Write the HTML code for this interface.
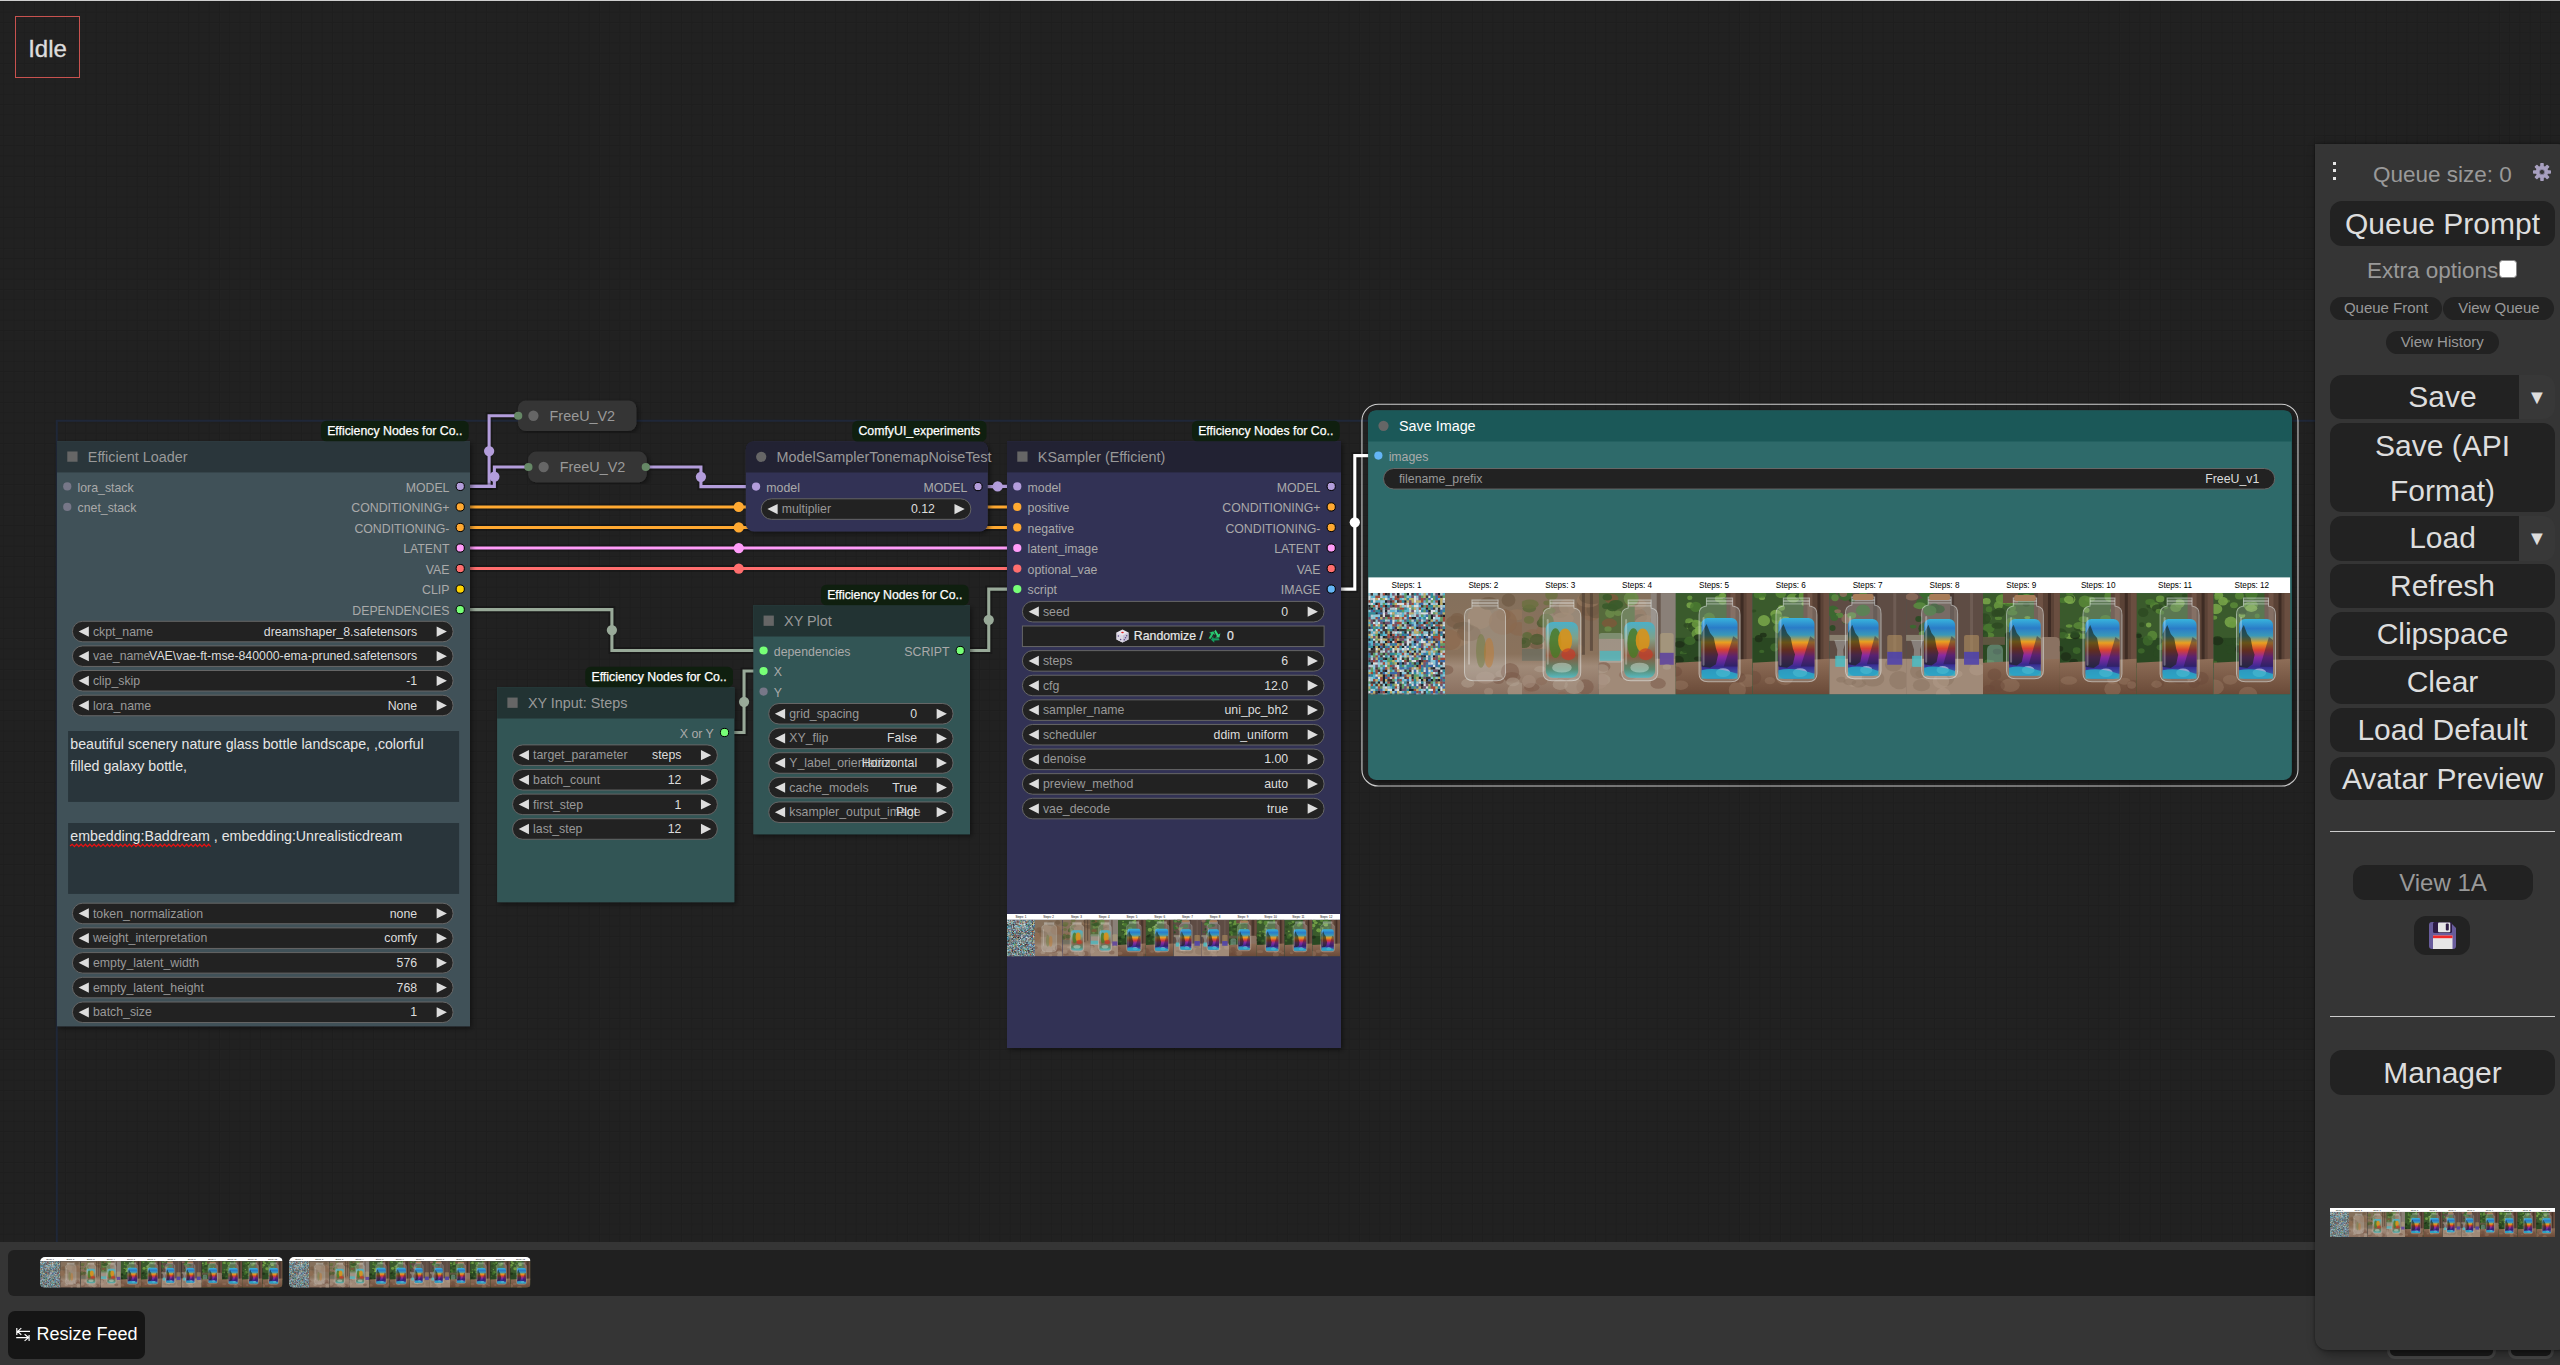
<!DOCTYPE html><html><head><meta charset="utf-8"><style>html,body{margin:0;padding:0;width:2560px;height:1365px;overflow:hidden;background:#212121;font-family:"Liberation Sans",sans-serif;}.abs{position:absolute;}.menu{position:absolute;left:2315px;top:144px;width:255px;height:1206px;background:#353535;border-radius:0 12px 12px 12px;box-shadow:0 0 3px rgba(0,0,0,.45),4px 4px 12px rgba(0,0,0,.4);color:#999;}.btn{position:absolute;background:#222;color:#ddd;border-radius:12px;text-align:center;font-size:30px;box-sizing:border-box;}.sbtn{position:absolute;background:#222;color:#999;border-radius:12px;text-align:center;font-size:15px;box-sizing:border-box;}</style></head><body><svg width="0" height="0" style="position:absolute" font-family='"Liberation Sans", sans-serif'><defs><linearGradient id="gal" x1="0" y1="0" x2="0" y2="1"><stop offset="0" stop-color="#38b4dc"/><stop offset="0.16" stop-color="#2a7cc8"/><stop offset="0.28" stop-color="#3a98b8"/><stop offset="0.4" stop-color="#e8a020"/><stop offset="0.52" stop-color="#d84030"/><stop offset="0.64" stop-color="#8a2aa0"/><stop offset="0.8" stop-color="#3a2a90"/><stop offset="1" stop-color="#3a78b8"/></linearGradient><linearGradient id="tre" x1="0" y1="0" x2="0" y2="1"><stop offset="0" stop-color="#4ab0c8"/><stop offset="0.3" stop-color="#80a088"/><stop offset="0.6" stop-color="#8a5a40"/><stop offset="0.85" stop-color="#5a8a70"/><stop offset="1" stop-color="#58b8c0"/></linearGradient><linearGradient id="tab" x1="0" y1="0" x2="0" y2="1"><stop offset="0" stop-color="#8e6e58"/><stop offset="1" stop-color="#6a4a38"/></linearGradient><linearGradient id="fogg" x1="0" y1="0" x2="0" y2="1"><stop offset="0" stop-color="#84705c"/><stop offset="0.6" stop-color="#8a725c"/><stop offset="0.72" stop-color="#a08a78"/><stop offset="1" stop-color="#8a7060"/></linearGradient><filter id="nz" x="0" y="0" width="100%" height="100%" color-interpolation-filters="sRGB"><feTurbulence type="fractalNoise" baseFrequency="0.5" numOctaves="1" seed="4"/><feComponentTransfer><feFuncR type="linear" slope="3.6" intercept="-1.3"/><feFuncG type="linear" slope="3.6" intercept="-1.2"/><feFuncB type="linear" slope="3.6" intercept="-1.12"/><feFuncA type="linear" slope="0" intercept="1"/></feComponentTransfer><feColorMatrix type="saturate" values="0.35"/></filter><symbol id="strip" viewBox="0 0 922 118" preserveAspectRatio="none"><rect width="922" height="16" fill="#fff"/><text x="38.4" y="11.3" font-size="8.2" fill="#000" text-anchor="middle">Steps: 1</text><text x="115.2" y="11.3" font-size="8.2" fill="#000" text-anchor="middle">Steps: 2</text><text x="192.1" y="11.3" font-size="8.2" fill="#000" text-anchor="middle">Steps: 3</text><text x="268.9" y="11.3" font-size="8.2" fill="#000" text-anchor="middle">Steps: 4</text><text x="345.8" y="11.3" font-size="8.2" fill="#000" text-anchor="middle">Steps: 5</text><text x="422.6" y="11.3" font-size="8.2" fill="#000" text-anchor="middle">Steps: 6</text><text x="499.4" y="11.3" font-size="8.2" fill="#000" text-anchor="middle">Steps: 7</text><text x="576.2" y="11.3" font-size="8.2" fill="#000" text-anchor="middle">Steps: 8</text><text x="653.1" y="11.3" font-size="8.2" fill="#000" text-anchor="middle">Steps: 9</text><text x="729.9" y="11.3" font-size="8.2" fill="#000" text-anchor="middle">Steps: 10</text><text x="806.7" y="11.3" font-size="8.2" fill="#000" text-anchor="middle">Steps: 11</text><text x="883.6" y="11.3" font-size="8.2" fill="#000" text-anchor="middle">Steps: 12</text><svg x="0" y="16" width="77.1" height="102" viewBox="0 0 77.1 102" overflow="hidden"><rect width="77" height="102" fill="#808a90"/><path fill="#5ab4cc" d="M50.4 0h2.4v2.4h-2.4zM74.4 0h2.4v2.4h-2.4zM2.4 2.4h2.4v2.4h-2.4zM4.8 2.4h2.4v2.4h-2.4zM14.4 2.4h2.4v2.4h-2.4zM40.8 2.4h2.4v2.4h-2.4zM76.8 2.4h2.4v2.4h-2.4zM19.2 4.8h2.4v2.4h-2.4zM24 4.8h2.4v2.4h-2.4zM31.2 4.8h2.4v2.4h-2.4zM69.6 4.8h2.4v2.4h-2.4zM7.2 7.2h2.4v2.4h-2.4zM9.6 7.2h2.4v2.4h-2.4zM55.2 7.2h2.4v2.4h-2.4zM64.8 7.2h2.4v2.4h-2.4zM4.8 9.6h2.4v2.4h-2.4zM16.8 9.6h2.4v2.4h-2.4zM45.6 9.6h2.4v2.4h-2.4zM43.2 12h2.4v2.4h-2.4zM50.4 12h2.4v2.4h-2.4zM38.4 14.4h2.4v2.4h-2.4zM52.8 14.4h2.4v2.4h-2.4zM55.2 14.4h2.4v2.4h-2.4zM21.6 16.8h2.4v2.4h-2.4zM24 16.8h2.4v2.4h-2.4zM36 16.8h2.4v2.4h-2.4zM38.4 16.8h2.4v2.4h-2.4zM76.8 16.8h2.4v2.4h-2.4zM26.4 19.2h2.4v2.4h-2.4zM33.6 19.2h2.4v2.4h-2.4zM48 19.2h2.4v2.4h-2.4zM21.6 21.6h2.4v2.4h-2.4zM33.6 21.6h2.4v2.4h-2.4zM55.2 21.6h2.4v2.4h-2.4zM52.8 24h2.4v2.4h-2.4zM26.4 26.4h2.4v2.4h-2.4zM33.6 26.4h2.4v2.4h-2.4zM55.2 26.4h2.4v2.4h-2.4zM69.6 26.4h2.4v2.4h-2.4zM0 28.8h2.4v2.4h-2.4zM43.2 28.8h2.4v2.4h-2.4zM52.8 28.8h2.4v2.4h-2.4zM28.8 31.2h2.4v2.4h-2.4zM9.6 33.6h2.4v2.4h-2.4zM19.2 33.6h2.4v2.4h-2.4zM36 33.6h2.4v2.4h-2.4zM45.6 33.6h2.4v2.4h-2.4zM2.4 38.4h2.4v2.4h-2.4zM9.6 38.4h2.4v2.4h-2.4zM14.4 38.4h2.4v2.4h-2.4zM4.8 40.8h2.4v2.4h-2.4zM14.4 40.8h2.4v2.4h-2.4zM16.8 40.8h2.4v2.4h-2.4zM26.4 40.8h2.4v2.4h-2.4zM0 43.2h2.4v2.4h-2.4zM36 45.6h2.4v2.4h-2.4zM0 48h2.4v2.4h-2.4zM2.4 48h2.4v2.4h-2.4zM43.2 48h2.4v2.4h-2.4zM2.4 50.4h2.4v2.4h-2.4zM9.6 50.4h2.4v2.4h-2.4zM43.2 50.4h2.4v2.4h-2.4zM48 52.8h2.4v2.4h-2.4zM57.6 52.8h2.4v2.4h-2.4zM31.2 55.2h2.4v2.4h-2.4zM55.2 55.2h2.4v2.4h-2.4zM64.8 55.2h2.4v2.4h-2.4zM33.6 57.6h2.4v2.4h-2.4zM57.6 57.6h2.4v2.4h-2.4zM28.8 60h2.4v2.4h-2.4zM31.2 60h2.4v2.4h-2.4zM38.4 60h2.4v2.4h-2.4zM52.8 60h2.4v2.4h-2.4zM62.4 60h2.4v2.4h-2.4zM9.6 62.4h2.4v2.4h-2.4zM33.6 62.4h2.4v2.4h-2.4zM48 62.4h2.4v2.4h-2.4zM9.6 67.2h2.4v2.4h-2.4zM14.4 67.2h2.4v2.4h-2.4zM16.8 67.2h2.4v2.4h-2.4zM26.4 67.2h2.4v2.4h-2.4zM31.2 67.2h2.4v2.4h-2.4zM14.4 72h2.4v2.4h-2.4zM36 74.4h2.4v2.4h-2.4zM4.8 76.8h2.4v2.4h-2.4zM12 76.8h2.4v2.4h-2.4zM24 76.8h2.4v2.4h-2.4zM62.4 76.8h2.4v2.4h-2.4zM50.4 79.2h2.4v2.4h-2.4zM60 79.2h2.4v2.4h-2.4zM74.4 79.2h2.4v2.4h-2.4zM4.8 81.6h2.4v2.4h-2.4zM50.4 81.6h2.4v2.4h-2.4zM72 81.6h2.4v2.4h-2.4zM76.8 81.6h2.4v2.4h-2.4zM4.8 84h2.4v2.4h-2.4zM9.6 86.4h2.4v2.4h-2.4zM26.4 86.4h2.4v2.4h-2.4zM33.6 86.4h2.4v2.4h-2.4zM7.2 88.8h2.4v2.4h-2.4zM16.8 88.8h2.4v2.4h-2.4zM64.8 88.8h2.4v2.4h-2.4zM4.8 91.2h2.4v2.4h-2.4zM76.8 91.2h2.4v2.4h-2.4zM21.6 93.6h2.4v2.4h-2.4zM50.4 96h2.4v2.4h-2.4zM67.2 96h2.4v2.4h-2.4zM33.6 98.4h2.4v2.4h-2.4zM57.6 98.4h2.4v2.4h-2.4zM67.2 100.8h2.4v2.4h-2.4z"/><path fill="#d8dde0" d="M31.2 0h2.4v2.4h-2.4zM40.8 0h2.4v2.4h-2.4zM0 2.4h2.4v2.4h-2.4zM45.6 2.4h2.4v2.4h-2.4zM60 2.4h2.4v2.4h-2.4zM0 4.8h2.4v2.4h-2.4zM4.8 4.8h2.4v2.4h-2.4zM9.6 4.8h2.4v2.4h-2.4zM16.8 4.8h2.4v2.4h-2.4zM45.6 4.8h2.4v2.4h-2.4zM62.4 4.8h2.4v2.4h-2.4zM74.4 4.8h2.4v2.4h-2.4zM4.8 7.2h2.4v2.4h-2.4zM45.6 7.2h2.4v2.4h-2.4zM2.4 9.6h2.4v2.4h-2.4zM28.8 9.6h2.4v2.4h-2.4zM31.2 9.6h2.4v2.4h-2.4zM33.6 9.6h2.4v2.4h-2.4zM38.4 12h2.4v2.4h-2.4zM45.6 12h2.4v2.4h-2.4zM48 12h2.4v2.4h-2.4zM7.2 14.4h2.4v2.4h-2.4zM26.4 14.4h2.4v2.4h-2.4zM40.8 14.4h2.4v2.4h-2.4zM72 14.4h2.4v2.4h-2.4zM45.6 16.8h2.4v2.4h-2.4zM50.4 16.8h2.4v2.4h-2.4zM62.4 16.8h2.4v2.4h-2.4zM64.8 16.8h2.4v2.4h-2.4zM14.4 19.2h2.4v2.4h-2.4zM21.6 19.2h2.4v2.4h-2.4zM52.8 19.2h2.4v2.4h-2.4zM55.2 19.2h2.4v2.4h-2.4zM57.6 19.2h2.4v2.4h-2.4zM62.4 19.2h2.4v2.4h-2.4zM14.4 21.6h2.4v2.4h-2.4zM28.8 21.6h2.4v2.4h-2.4zM40.8 21.6h2.4v2.4h-2.4zM57.6 24h2.4v2.4h-2.4zM64.8 24h2.4v2.4h-2.4zM24 26.4h2.4v2.4h-2.4zM4.8 28.8h2.4v2.4h-2.4zM9.6 28.8h2.4v2.4h-2.4zM24 28.8h2.4v2.4h-2.4zM7.2 31.2h2.4v2.4h-2.4zM55.2 31.2h2.4v2.4h-2.4zM64.8 31.2h2.4v2.4h-2.4zM74.4 31.2h2.4v2.4h-2.4zM16.8 33.6h2.4v2.4h-2.4zM40.8 33.6h2.4v2.4h-2.4zM7.2 36h2.4v2.4h-2.4zM76.8 36h2.4v2.4h-2.4zM26.4 38.4h2.4v2.4h-2.4zM31.2 38.4h2.4v2.4h-2.4zM38.4 38.4h2.4v2.4h-2.4zM74.4 38.4h2.4v2.4h-2.4zM48 40.8h2.4v2.4h-2.4zM57.6 40.8h2.4v2.4h-2.4zM72 43.2h2.4v2.4h-2.4zM4.8 45.6h2.4v2.4h-2.4zM12 45.6h2.4v2.4h-2.4zM38.4 45.6h2.4v2.4h-2.4zM52.8 45.6h2.4v2.4h-2.4zM72 45.6h2.4v2.4h-2.4zM76.8 45.6h2.4v2.4h-2.4zM24 48h2.4v2.4h-2.4zM38.4 48h2.4v2.4h-2.4zM52.8 48h2.4v2.4h-2.4zM55.2 48h2.4v2.4h-2.4zM38.4 50.4h2.4v2.4h-2.4zM48 50.4h2.4v2.4h-2.4zM76.8 50.4h2.4v2.4h-2.4zM36 52.8h2.4v2.4h-2.4zM45.6 52.8h2.4v2.4h-2.4zM7.2 55.2h2.4v2.4h-2.4zM24 55.2h2.4v2.4h-2.4zM33.6 55.2h2.4v2.4h-2.4zM38.4 55.2h2.4v2.4h-2.4zM67.2 55.2h2.4v2.4h-2.4zM14.4 57.6h2.4v2.4h-2.4zM24 57.6h2.4v2.4h-2.4zM72 60h2.4v2.4h-2.4zM14.4 62.4h2.4v2.4h-2.4zM31.2 62.4h2.4v2.4h-2.4zM43.2 62.4h2.4v2.4h-2.4zM57.6 62.4h2.4v2.4h-2.4zM31.2 64.8h2.4v2.4h-2.4zM33.6 67.2h2.4v2.4h-2.4zM43.2 67.2h2.4v2.4h-2.4zM45.6 67.2h2.4v2.4h-2.4zM4.8 69.6h2.4v2.4h-2.4zM7.2 69.6h2.4v2.4h-2.4zM62.4 69.6h2.4v2.4h-2.4zM69.6 69.6h2.4v2.4h-2.4zM74.4 69.6h2.4v2.4h-2.4zM16.8 72h2.4v2.4h-2.4zM28.8 72h2.4v2.4h-2.4zM64.8 72h2.4v2.4h-2.4zM28.8 74.4h2.4v2.4h-2.4zM76.8 74.4h2.4v2.4h-2.4zM31.2 76.8h2.4v2.4h-2.4zM43.2 76.8h2.4v2.4h-2.4zM48 76.8h2.4v2.4h-2.4zM55.2 76.8h2.4v2.4h-2.4zM60 76.8h2.4v2.4h-2.4zM72 76.8h2.4v2.4h-2.4zM43.2 79.2h2.4v2.4h-2.4zM64.8 79.2h2.4v2.4h-2.4zM7.2 81.6h2.4v2.4h-2.4zM60 81.6h2.4v2.4h-2.4zM9.6 84h2.4v2.4h-2.4zM0 86.4h2.4v2.4h-2.4zM26.4 88.8h2.4v2.4h-2.4zM40.8 88.8h2.4v2.4h-2.4zM50.4 88.8h2.4v2.4h-2.4zM76.8 88.8h2.4v2.4h-2.4zM28.8 91.2h2.4v2.4h-2.4zM43.2 91.2h2.4v2.4h-2.4zM48 91.2h2.4v2.4h-2.4zM55.2 91.2h2.4v2.4h-2.4zM69.6 91.2h2.4v2.4h-2.4zM16.8 93.6h2.4v2.4h-2.4zM57.6 93.6h2.4v2.4h-2.4zM72 93.6h2.4v2.4h-2.4zM19.2 96h2.4v2.4h-2.4zM21.6 96h2.4v2.4h-2.4zM28.8 96h2.4v2.4h-2.4zM60 96h2.4v2.4h-2.4zM62.4 96h2.4v2.4h-2.4zM72 96h2.4v2.4h-2.4zM0 98.4h2.4v2.4h-2.4zM76.8 98.4h2.4v2.4h-2.4zM14.4 100.8h2.4v2.4h-2.4zM76.8 100.8h2.4v2.4h-2.4z"/><path fill="#1c2228" d="M16.8 0h2.4v2.4h-2.4zM28.8 0h2.4v2.4h-2.4zM38.4 0h2.4v2.4h-2.4zM69.6 0h2.4v2.4h-2.4zM76.8 4.8h2.4v2.4h-2.4zM16.8 7.2h2.4v2.4h-2.4zM36 7.2h2.4v2.4h-2.4zM69.6 7.2h2.4v2.4h-2.4zM7.2 9.6h2.4v2.4h-2.4zM60 9.6h2.4v2.4h-2.4zM69.6 9.6h2.4v2.4h-2.4zM74.4 9.6h2.4v2.4h-2.4zM0 12h2.4v2.4h-2.4zM16.8 12h2.4v2.4h-2.4zM2.4 14.4h2.4v2.4h-2.4zM9.6 14.4h2.4v2.4h-2.4zM57.6 14.4h2.4v2.4h-2.4zM69.6 14.4h2.4v2.4h-2.4zM76.8 14.4h2.4v2.4h-2.4zM16.8 16.8h2.4v2.4h-2.4zM60 16.8h2.4v2.4h-2.4zM7.2 19.2h2.4v2.4h-2.4zM62.4 21.6h2.4v2.4h-2.4zM74.4 21.6h2.4v2.4h-2.4zM43.2 24h2.4v2.4h-2.4zM45.6 24h2.4v2.4h-2.4zM62.4 24h2.4v2.4h-2.4zM60 26.4h2.4v2.4h-2.4zM76.8 26.4h2.4v2.4h-2.4zM38.4 28.8h2.4v2.4h-2.4zM55.2 28.8h2.4v2.4h-2.4zM76.8 28.8h2.4v2.4h-2.4zM16.8 31.2h2.4v2.4h-2.4zM48 33.6h2.4v2.4h-2.4zM57.6 33.6h2.4v2.4h-2.4zM62.4 33.6h2.4v2.4h-2.4zM28.8 36h2.4v2.4h-2.4zM55.2 36h2.4v2.4h-2.4zM36 38.4h2.4v2.4h-2.4zM60 38.4h2.4v2.4h-2.4zM9.6 40.8h2.4v2.4h-2.4zM21.6 40.8h2.4v2.4h-2.4zM14.4 43.2h2.4v2.4h-2.4zM43.2 43.2h2.4v2.4h-2.4zM55.2 43.2h2.4v2.4h-2.4zM74.4 43.2h2.4v2.4h-2.4zM0 45.6h2.4v2.4h-2.4zM24 45.6h2.4v2.4h-2.4zM16.8 48h2.4v2.4h-2.4zM21.6 48h2.4v2.4h-2.4zM28.8 48h2.4v2.4h-2.4zM31.2 48h2.4v2.4h-2.4zM45.6 48h2.4v2.4h-2.4zM14.4 50.4h2.4v2.4h-2.4zM36 50.4h2.4v2.4h-2.4zM4.8 52.8h2.4v2.4h-2.4zM9.6 52.8h2.4v2.4h-2.4zM24 52.8h2.4v2.4h-2.4zM33.6 52.8h2.4v2.4h-2.4zM2.4 55.2h2.4v2.4h-2.4zM38.4 57.6h2.4v2.4h-2.4zM45.6 57.6h2.4v2.4h-2.4zM43.2 60h2.4v2.4h-2.4zM21.6 62.4h2.4v2.4h-2.4zM55.2 62.4h2.4v2.4h-2.4zM64.8 62.4h2.4v2.4h-2.4zM16.8 64.8h2.4v2.4h-2.4zM24 64.8h2.4v2.4h-2.4zM50.4 67.2h2.4v2.4h-2.4zM2.4 69.6h2.4v2.4h-2.4zM28.8 69.6h2.4v2.4h-2.4zM33.6 69.6h2.4v2.4h-2.4zM50.4 69.6h2.4v2.4h-2.4zM48 72h2.4v2.4h-2.4zM64.8 74.4h2.4v2.4h-2.4zM72 74.4h2.4v2.4h-2.4zM74.4 74.4h2.4v2.4h-2.4zM16.8 76.8h2.4v2.4h-2.4zM69.6 76.8h2.4v2.4h-2.4zM31.2 79.2h2.4v2.4h-2.4zM14.4 81.6h2.4v2.4h-2.4zM21.6 81.6h2.4v2.4h-2.4zM31.2 81.6h2.4v2.4h-2.4zM67.2 81.6h2.4v2.4h-2.4zM69.6 81.6h2.4v2.4h-2.4zM14.4 84h2.4v2.4h-2.4zM43.2 84h2.4v2.4h-2.4zM50.4 84h2.4v2.4h-2.4zM14.4 86.4h2.4v2.4h-2.4zM52.8 86.4h2.4v2.4h-2.4zM57.6 86.4h2.4v2.4h-2.4zM62.4 86.4h2.4v2.4h-2.4zM69.6 86.4h2.4v2.4h-2.4zM9.6 88.8h2.4v2.4h-2.4zM14.4 88.8h2.4v2.4h-2.4zM21.6 88.8h2.4v2.4h-2.4zM24 88.8h2.4v2.4h-2.4zM16.8 91.2h2.4v2.4h-2.4zM52.8 91.2h2.4v2.4h-2.4zM31.2 93.6h2.4v2.4h-2.4zM24 96h2.4v2.4h-2.4zM31.2 96h2.4v2.4h-2.4zM40.8 96h2.4v2.4h-2.4zM43.2 96h2.4v2.4h-2.4zM69.6 96h2.4v2.4h-2.4zM9.6 98.4h2.4v2.4h-2.4zM16.8 98.4h2.4v2.4h-2.4zM21.6 100.8h2.4v2.4h-2.4zM45.6 100.8h2.4v2.4h-2.4z"/><path fill="#a04a3a" d="M14.4 0h2.4v2.4h-2.4zM7.2 2.4h2.4v2.4h-2.4zM9.6 2.4h2.4v2.4h-2.4zM26.4 2.4h2.4v2.4h-2.4zM31.2 2.4h2.4v2.4h-2.4zM69.6 2.4h2.4v2.4h-2.4zM26.4 4.8h2.4v2.4h-2.4zM28.8 4.8h2.4v2.4h-2.4zM52.8 4.8h2.4v2.4h-2.4zM0 7.2h2.4v2.4h-2.4zM24 7.2h2.4v2.4h-2.4zM31.2 7.2h2.4v2.4h-2.4zM52.8 7.2h2.4v2.4h-2.4zM67.2 7.2h2.4v2.4h-2.4zM9.6 9.6h2.4v2.4h-2.4zM36 9.6h2.4v2.4h-2.4zM43.2 9.6h2.4v2.4h-2.4zM4.8 12h2.4v2.4h-2.4zM9.6 12h2.4v2.4h-2.4zM14.4 12h2.4v2.4h-2.4zM26.4 12h2.4v2.4h-2.4zM57.6 12h2.4v2.4h-2.4zM12 14.4h2.4v2.4h-2.4zM31.2 14.4h2.4v2.4h-2.4zM33.6 14.4h2.4v2.4h-2.4zM50.4 14.4h2.4v2.4h-2.4zM36 21.6h2.4v2.4h-2.4zM69.6 21.6h2.4v2.4h-2.4zM7.2 24h2.4v2.4h-2.4zM19.2 24h2.4v2.4h-2.4zM26.4 24h2.4v2.4h-2.4zM28.8 24h2.4v2.4h-2.4zM33.6 24h2.4v2.4h-2.4zM40.8 24h2.4v2.4h-2.4zM74.4 24h2.4v2.4h-2.4zM67.2 26.4h2.4v2.4h-2.4zM74.4 26.4h2.4v2.4h-2.4zM28.8 28.8h2.4v2.4h-2.4zM31.2 28.8h2.4v2.4h-2.4zM57.6 28.8h2.4v2.4h-2.4zM4.8 31.2h2.4v2.4h-2.4zM24 31.2h2.4v2.4h-2.4zM52.8 31.2h2.4v2.4h-2.4zM67.2 31.2h2.4v2.4h-2.4zM69.6 31.2h2.4v2.4h-2.4zM38.4 33.6h2.4v2.4h-2.4zM9.6 36h2.4v2.4h-2.4zM50.4 36h2.4v2.4h-2.4zM69.6 36h2.4v2.4h-2.4zM52.8 38.4h2.4v2.4h-2.4zM76.8 38.4h2.4v2.4h-2.4zM19.2 40.8h2.4v2.4h-2.4zM24 40.8h2.4v2.4h-2.4zM40.8 40.8h2.4v2.4h-2.4zM69.6 40.8h2.4v2.4h-2.4zM19.2 43.2h2.4v2.4h-2.4zM28.8 43.2h2.4v2.4h-2.4zM33.6 43.2h2.4v2.4h-2.4zM45.6 43.2h2.4v2.4h-2.4zM64.8 43.2h2.4v2.4h-2.4zM67.2 43.2h2.4v2.4h-2.4zM69.6 43.2h2.4v2.4h-2.4zM76.8 43.2h2.4v2.4h-2.4zM26.4 45.6h2.4v2.4h-2.4zM40.8 45.6h2.4v2.4h-2.4zM69.6 45.6h2.4v2.4h-2.4zM19.2 48h2.4v2.4h-2.4zM26.4 48h2.4v2.4h-2.4zM74.4 48h2.4v2.4h-2.4zM12 50.4h2.4v2.4h-2.4zM31.2 50.4h2.4v2.4h-2.4zM62.4 50.4h2.4v2.4h-2.4zM28.8 52.8h2.4v2.4h-2.4zM60 52.8h2.4v2.4h-2.4zM72 52.8h2.4v2.4h-2.4zM19.2 55.2h2.4v2.4h-2.4zM43.2 55.2h2.4v2.4h-2.4zM57.6 55.2h2.4v2.4h-2.4zM33.6 60h2.4v2.4h-2.4zM74.4 60h2.4v2.4h-2.4zM7.2 62.4h2.4v2.4h-2.4zM24 62.4h2.4v2.4h-2.4zM45.6 62.4h2.4v2.4h-2.4zM26.4 64.8h2.4v2.4h-2.4zM64.8 64.8h2.4v2.4h-2.4zM72 64.8h2.4v2.4h-2.4zM74.4 64.8h2.4v2.4h-2.4zM76.8 64.8h2.4v2.4h-2.4zM4.8 67.2h2.4v2.4h-2.4zM36 67.2h2.4v2.4h-2.4zM55.2 67.2h2.4v2.4h-2.4zM69.6 67.2h2.4v2.4h-2.4zM14.4 69.6h2.4v2.4h-2.4zM21.6 72h2.4v2.4h-2.4zM50.4 72h2.4v2.4h-2.4zM16.8 74.4h2.4v2.4h-2.4zM26.4 74.4h2.4v2.4h-2.4zM50.4 74.4h2.4v2.4h-2.4zM7.2 76.8h2.4v2.4h-2.4zM2.4 79.2h2.4v2.4h-2.4zM7.2 79.2h2.4v2.4h-2.4zM16.8 81.6h2.4v2.4h-2.4zM36 81.6h2.4v2.4h-2.4zM12 84h2.4v2.4h-2.4zM19.2 84h2.4v2.4h-2.4zM24 84h2.4v2.4h-2.4zM38.4 84h2.4v2.4h-2.4zM4.8 86.4h2.4v2.4h-2.4zM12 86.4h2.4v2.4h-2.4zM31.2 86.4h2.4v2.4h-2.4zM43.2 86.4h2.4v2.4h-2.4zM19.2 88.8h2.4v2.4h-2.4zM67.2 88.8h2.4v2.4h-2.4zM72 88.8h2.4v2.4h-2.4zM2.4 91.2h2.4v2.4h-2.4zM9.6 93.6h2.4v2.4h-2.4zM26.4 93.6h2.4v2.4h-2.4zM62.4 93.6h2.4v2.4h-2.4zM64.8 93.6h2.4v2.4h-2.4zM45.6 96h2.4v2.4h-2.4zM64.8 96h2.4v2.4h-2.4zM14.4 98.4h2.4v2.4h-2.4zM48 98.4h2.4v2.4h-2.4zM64.8 98.4h2.4v2.4h-2.4zM4.8 100.8h2.4v2.4h-2.4zM33.6 100.8h2.4v2.4h-2.4zM52.8 100.8h2.4v2.4h-2.4zM62.4 100.8h2.4v2.4h-2.4zM74.4 100.8h2.4v2.4h-2.4z"/><path fill="#5e9e64" d="M36 0h2.4v2.4h-2.4zM36 2.4h2.4v2.4h-2.4zM52.8 2.4h2.4v2.4h-2.4zM64.8 2.4h2.4v2.4h-2.4zM74.4 2.4h2.4v2.4h-2.4zM12 4.8h2.4v2.4h-2.4zM57.6 4.8h2.4v2.4h-2.4zM64.8 4.8h2.4v2.4h-2.4zM57.6 7.2h2.4v2.4h-2.4zM62.4 7.2h2.4v2.4h-2.4zM14.4 9.6h2.4v2.4h-2.4zM24 9.6h2.4v2.4h-2.4zM2.4 12h2.4v2.4h-2.4zM55.2 12h2.4v2.4h-2.4zM67.2 12h2.4v2.4h-2.4zM76.8 12h2.4v2.4h-2.4zM28.8 14.4h2.4v2.4h-2.4zM43.2 14.4h2.4v2.4h-2.4zM60 14.4h2.4v2.4h-2.4zM33.6 16.8h2.4v2.4h-2.4zM55.2 16.8h2.4v2.4h-2.4zM64.8 19.2h2.4v2.4h-2.4zM24 21.6h2.4v2.4h-2.4zM52.8 21.6h2.4v2.4h-2.4zM60 21.6h2.4v2.4h-2.4zM16.8 24h2.4v2.4h-2.4zM60 24h2.4v2.4h-2.4zM72 24h2.4v2.4h-2.4zM28.8 26.4h2.4v2.4h-2.4zM40.8 26.4h2.4v2.4h-2.4zM48 26.4h2.4v2.4h-2.4zM72 26.4h2.4v2.4h-2.4zM36 28.8h2.4v2.4h-2.4zM60 28.8h2.4v2.4h-2.4zM76.8 31.2h2.4v2.4h-2.4zM4.8 33.6h2.4v2.4h-2.4zM31.2 33.6h2.4v2.4h-2.4zM19.2 36h2.4v2.4h-2.4zM38.4 36h2.4v2.4h-2.4zM40.8 36h2.4v2.4h-2.4zM52.8 36h2.4v2.4h-2.4zM62.4 36h2.4v2.4h-2.4zM50.4 38.4h2.4v2.4h-2.4zM7.2 40.8h2.4v2.4h-2.4zM31.2 40.8h2.4v2.4h-2.4zM64.8 40.8h2.4v2.4h-2.4zM7.2 45.6h2.4v2.4h-2.4zM33.6 48h2.4v2.4h-2.4zM72 50.4h2.4v2.4h-2.4zM74.4 50.4h2.4v2.4h-2.4zM40.8 52.8h2.4v2.4h-2.4zM62.4 52.8h2.4v2.4h-2.4zM67.2 52.8h2.4v2.4h-2.4zM45.6 55.2h2.4v2.4h-2.4zM69.6 55.2h2.4v2.4h-2.4zM72 55.2h2.4v2.4h-2.4zM74.4 55.2h2.4v2.4h-2.4zM67.2 57.6h2.4v2.4h-2.4zM76.8 57.6h2.4v2.4h-2.4zM4.8 60h2.4v2.4h-2.4zM12 60h2.4v2.4h-2.4zM16.8 60h2.4v2.4h-2.4zM26.4 60h2.4v2.4h-2.4zM4.8 62.4h2.4v2.4h-2.4zM76.8 62.4h2.4v2.4h-2.4zM19.2 64.8h2.4v2.4h-2.4zM36 64.8h2.4v2.4h-2.4zM45.6 64.8h2.4v2.4h-2.4zM48 64.8h2.4v2.4h-2.4zM69.6 64.8h2.4v2.4h-2.4zM19.2 67.2h2.4v2.4h-2.4zM21.6 67.2h2.4v2.4h-2.4zM40.8 67.2h2.4v2.4h-2.4zM24 69.6h2.4v2.4h-2.4zM43.2 69.6h2.4v2.4h-2.4zM12 72h2.4v2.4h-2.4zM19.2 72h2.4v2.4h-2.4zM33.6 72h2.4v2.4h-2.4zM45.6 72h2.4v2.4h-2.4zM2.4 74.4h2.4v2.4h-2.4zM9.6 74.4h2.4v2.4h-2.4zM2.4 76.8h2.4v2.4h-2.4zM21.6 76.8h2.4v2.4h-2.4zM38.4 76.8h2.4v2.4h-2.4zM50.4 76.8h2.4v2.4h-2.4zM45.6 81.6h2.4v2.4h-2.4zM48 81.6h2.4v2.4h-2.4zM55.2 81.6h2.4v2.4h-2.4zM62.4 81.6h2.4v2.4h-2.4zM45.6 84h2.4v2.4h-2.4zM52.8 84h2.4v2.4h-2.4zM64.8 84h2.4v2.4h-2.4zM24 86.4h2.4v2.4h-2.4zM64.8 86.4h2.4v2.4h-2.4zM0 88.8h2.4v2.4h-2.4zM31.2 88.8h2.4v2.4h-2.4zM62.4 88.8h2.4v2.4h-2.4zM19.2 91.2h2.4v2.4h-2.4zM24 91.2h2.4v2.4h-2.4zM33.6 91.2h2.4v2.4h-2.4zM12 93.6h2.4v2.4h-2.4zM33.6 93.6h2.4v2.4h-2.4zM45.6 93.6h2.4v2.4h-2.4zM60 93.6h2.4v2.4h-2.4zM76.8 93.6h2.4v2.4h-2.4zM0 96h2.4v2.4h-2.4zM60 98.4h2.4v2.4h-2.4zM69.6 98.4h2.4v2.4h-2.4zM12 100.8h2.4v2.4h-2.4zM24 100.8h2.4v2.4h-2.4zM28.8 100.8h2.4v2.4h-2.4z"/><path fill="#3a6aa8" d="M19.2 2.4h2.4v2.4h-2.4zM67.2 2.4h2.4v2.4h-2.4zM60 4.8h2.4v2.4h-2.4zM67.2 4.8h2.4v2.4h-2.4zM21.6 9.6h2.4v2.4h-2.4zM50.4 9.6h2.4v2.4h-2.4zM52.8 9.6h2.4v2.4h-2.4zM62.4 14.4h2.4v2.4h-2.4zM74.4 14.4h2.4v2.4h-2.4zM2.4 16.8h2.4v2.4h-2.4zM28.8 16.8h2.4v2.4h-2.4zM57.6 16.8h2.4v2.4h-2.4zM72 16.8h2.4v2.4h-2.4zM9.6 19.2h2.4v2.4h-2.4zM12 19.2h2.4v2.4h-2.4zM72 19.2h2.4v2.4h-2.4zM57.6 21.6h2.4v2.4h-2.4zM76.8 21.6h2.4v2.4h-2.4zM9.6 24h2.4v2.4h-2.4zM38.4 24h2.4v2.4h-2.4zM50.4 24h2.4v2.4h-2.4zM12 26.4h2.4v2.4h-2.4zM21.6 26.4h2.4v2.4h-2.4zM45.6 26.4h2.4v2.4h-2.4zM21.6 28.8h2.4v2.4h-2.4zM62.4 28.8h2.4v2.4h-2.4zM43.2 31.2h2.4v2.4h-2.4zM48 31.2h2.4v2.4h-2.4zM2.4 33.6h2.4v2.4h-2.4zM12 33.6h2.4v2.4h-2.4zM24 33.6h2.4v2.4h-2.4zM52.8 33.6h2.4v2.4h-2.4zM62.4 38.4h2.4v2.4h-2.4zM72 38.4h2.4v2.4h-2.4zM33.6 40.8h2.4v2.4h-2.4zM38.4 40.8h2.4v2.4h-2.4zM52.8 43.2h2.4v2.4h-2.4zM57.6 43.2h2.4v2.4h-2.4zM62.4 43.2h2.4v2.4h-2.4zM48 45.6h2.4v2.4h-2.4zM50.4 45.6h2.4v2.4h-2.4zM62.4 45.6h2.4v2.4h-2.4zM57.6 48h2.4v2.4h-2.4zM69.6 48h2.4v2.4h-2.4zM0 50.4h2.4v2.4h-2.4zM21.6 50.4h2.4v2.4h-2.4zM26.4 50.4h2.4v2.4h-2.4zM45.6 50.4h2.4v2.4h-2.4zM69.6 50.4h2.4v2.4h-2.4zM12 52.8h2.4v2.4h-2.4zM19.2 52.8h2.4v2.4h-2.4zM38.4 52.8h2.4v2.4h-2.4zM50.4 52.8h2.4v2.4h-2.4zM69.6 52.8h2.4v2.4h-2.4zM76.8 55.2h2.4v2.4h-2.4zM0 60h2.4v2.4h-2.4zM55.2 60h2.4v2.4h-2.4zM69.6 60h2.4v2.4h-2.4zM50.4 62.4h2.4v2.4h-2.4zM60 62.4h2.4v2.4h-2.4zM9.6 64.8h2.4v2.4h-2.4zM43.2 64.8h2.4v2.4h-2.4zM60 67.2h2.4v2.4h-2.4zM67.2 67.2h2.4v2.4h-2.4zM72 67.2h2.4v2.4h-2.4zM74.4 67.2h2.4v2.4h-2.4zM31.2 69.6h2.4v2.4h-2.4zM40.8 69.6h2.4v2.4h-2.4zM57.6 69.6h2.4v2.4h-2.4zM67.2 69.6h2.4v2.4h-2.4zM43.2 72h2.4v2.4h-2.4zM52.8 72h2.4v2.4h-2.4zM60 72h2.4v2.4h-2.4zM62.4 72h2.4v2.4h-2.4zM67.2 72h2.4v2.4h-2.4zM14.4 74.4h2.4v2.4h-2.4zM31.2 74.4h2.4v2.4h-2.4zM33.6 74.4h2.4v2.4h-2.4zM38.4 74.4h2.4v2.4h-2.4zM57.6 74.4h2.4v2.4h-2.4zM45.6 76.8h2.4v2.4h-2.4zM57.6 76.8h2.4v2.4h-2.4zM14.4 79.2h2.4v2.4h-2.4zM21.6 79.2h2.4v2.4h-2.4zM24 79.2h2.4v2.4h-2.4zM26.4 79.2h2.4v2.4h-2.4zM57.6 79.2h2.4v2.4h-2.4zM0 81.6h2.4v2.4h-2.4zM33.6 81.6h2.4v2.4h-2.4zM7.2 84h2.4v2.4h-2.4zM16.8 84h2.4v2.4h-2.4zM72 84h2.4v2.4h-2.4zM38.4 86.4h2.4v2.4h-2.4zM60 86.4h2.4v2.4h-2.4zM28.8 88.8h2.4v2.4h-2.4zM21.6 91.2h2.4v2.4h-2.4zM45.6 91.2h2.4v2.4h-2.4zM48 93.6h2.4v2.4h-2.4zM74.4 93.6h2.4v2.4h-2.4zM12 96h2.4v2.4h-2.4zM2.4 98.4h2.4v2.4h-2.4zM26.4 98.4h2.4v2.4h-2.4zM45.6 98.4h2.4v2.4h-2.4zM62.4 98.4h2.4v2.4h-2.4zM67.2 98.4h2.4v2.4h-2.4zM9.6 100.8h2.4v2.4h-2.4zM36 100.8h2.4v2.4h-2.4z"/><path fill="#c0b068" d="M55.2 0h2.4v2.4h-2.4zM55.2 2.4h2.4v2.4h-2.4zM7.2 4.8h2.4v2.4h-2.4zM14.4 4.8h2.4v2.4h-2.4zM36 4.8h2.4v2.4h-2.4zM40.8 4.8h2.4v2.4h-2.4zM43.2 4.8h2.4v2.4h-2.4zM72 4.8h2.4v2.4h-2.4zM38.4 7.2h2.4v2.4h-2.4zM43.2 7.2h2.4v2.4h-2.4zM48 7.2h2.4v2.4h-2.4zM50.4 7.2h2.4v2.4h-2.4zM72 7.2h2.4v2.4h-2.4zM26.4 9.6h2.4v2.4h-2.4zM72 9.6h2.4v2.4h-2.4zM31.2 12h2.4v2.4h-2.4zM40.8 12h2.4v2.4h-2.4zM64.8 12h2.4v2.4h-2.4zM69.6 12h2.4v2.4h-2.4zM45.6 14.4h2.4v2.4h-2.4zM24 19.2h2.4v2.4h-2.4zM40.8 19.2h2.4v2.4h-2.4zM43.2 19.2h2.4v2.4h-2.4zM67.2 19.2h2.4v2.4h-2.4zM74.4 19.2h2.4v2.4h-2.4zM12 24h2.4v2.4h-2.4zM24 24h2.4v2.4h-2.4zM31.2 24h2.4v2.4h-2.4zM76.8 24h2.4v2.4h-2.4zM0 26.4h2.4v2.4h-2.4zM62.4 26.4h2.4v2.4h-2.4zM0 31.2h2.4v2.4h-2.4zM9.6 31.2h2.4v2.4h-2.4zM14.4 31.2h2.4v2.4h-2.4zM31.2 31.2h2.4v2.4h-2.4zM72 31.2h2.4v2.4h-2.4zM28.8 33.6h2.4v2.4h-2.4zM43.2 33.6h2.4v2.4h-2.4zM45.6 36h2.4v2.4h-2.4zM72 36h2.4v2.4h-2.4zM7.2 38.4h2.4v2.4h-2.4zM19.2 38.4h2.4v2.4h-2.4zM45.6 38.4h2.4v2.4h-2.4zM48 38.4h2.4v2.4h-2.4zM64.8 38.4h2.4v2.4h-2.4zM0 40.8h2.4v2.4h-2.4zM76.8 40.8h2.4v2.4h-2.4zM2.4 43.2h2.4v2.4h-2.4zM7.2 43.2h2.4v2.4h-2.4zM9.6 45.6h2.4v2.4h-2.4zM14.4 45.6h2.4v2.4h-2.4zM16.8 45.6h2.4v2.4h-2.4zM28.8 45.6h2.4v2.4h-2.4zM60 48h2.4v2.4h-2.4zM64.8 48h2.4v2.4h-2.4zM72 48h2.4v2.4h-2.4zM16.8 50.4h2.4v2.4h-2.4zM28.8 50.4h2.4v2.4h-2.4zM55.2 50.4h2.4v2.4h-2.4zM7.2 52.8h2.4v2.4h-2.4zM21.6 52.8h2.4v2.4h-2.4zM26.4 52.8h2.4v2.4h-2.4zM76.8 52.8h2.4v2.4h-2.4zM9.6 55.2h2.4v2.4h-2.4zM26.4 55.2h2.4v2.4h-2.4zM50.4 55.2h2.4v2.4h-2.4zM62.4 55.2h2.4v2.4h-2.4zM7.2 57.6h2.4v2.4h-2.4zM36 57.6h2.4v2.4h-2.4zM40.8 57.6h2.4v2.4h-2.4zM60 57.6h2.4v2.4h-2.4zM64.8 57.6h2.4v2.4h-2.4zM72 57.6h2.4v2.4h-2.4zM45.6 60h2.4v2.4h-2.4zM50.4 60h2.4v2.4h-2.4zM60 60h2.4v2.4h-2.4zM76.8 60h2.4v2.4h-2.4zM38.4 62.4h2.4v2.4h-2.4zM69.6 62.4h2.4v2.4h-2.4zM7.2 64.8h2.4v2.4h-2.4zM24 67.2h2.4v2.4h-2.4zM19.2 69.6h2.4v2.4h-2.4zM26.4 69.6h2.4v2.4h-2.4zM52.8 69.6h2.4v2.4h-2.4zM76.8 69.6h2.4v2.4h-2.4zM19.2 74.4h2.4v2.4h-2.4zM43.2 74.4h2.4v2.4h-2.4zM48 74.4h2.4v2.4h-2.4zM60 74.4h2.4v2.4h-2.4zM28.8 76.8h2.4v2.4h-2.4zM0 79.2h2.4v2.4h-2.4zM19.2 79.2h2.4v2.4h-2.4zM52.8 79.2h2.4v2.4h-2.4zM62.4 79.2h2.4v2.4h-2.4zM9.6 81.6h2.4v2.4h-2.4zM12 81.6h2.4v2.4h-2.4zM26.4 81.6h2.4v2.4h-2.4zM38.4 81.6h2.4v2.4h-2.4zM40.8 81.6h2.4v2.4h-2.4zM48 84h2.4v2.4h-2.4zM69.6 84h2.4v2.4h-2.4zM7.2 86.4h2.4v2.4h-2.4zM16.8 86.4h2.4v2.4h-2.4zM48 86.4h2.4v2.4h-2.4zM55.2 86.4h2.4v2.4h-2.4zM69.6 88.8h2.4v2.4h-2.4zM9.6 91.2h2.4v2.4h-2.4zM26.4 91.2h2.4v2.4h-2.4zM60 91.2h2.4v2.4h-2.4zM0 93.6h2.4v2.4h-2.4zM38.4 93.6h2.4v2.4h-2.4zM50.4 93.6h2.4v2.4h-2.4zM67.2 93.6h2.4v2.4h-2.4zM16.8 96h2.4v2.4h-2.4zM48 96h2.4v2.4h-2.4zM74.4 96h2.4v2.4h-2.4zM76.8 96h2.4v2.4h-2.4zM4.8 98.4h2.4v2.4h-2.4zM21.6 98.4h2.4v2.4h-2.4zM28.8 98.4h2.4v2.4h-2.4zM38.4 98.4h2.4v2.4h-2.4zM2.4 100.8h2.4v2.4h-2.4z"/><path fill="#8ac8d8" d="M0 0h2.4v2.4h-2.4zM4.8 0h2.4v2.4h-2.4zM7.2 0h2.4v2.4h-2.4zM21.6 0h2.4v2.4h-2.4zM33.6 0h2.4v2.4h-2.4zM57.6 0h2.4v2.4h-2.4zM16.8 2.4h2.4v2.4h-2.4zM21.6 2.4h2.4v2.4h-2.4zM38.4 2.4h2.4v2.4h-2.4zM48 2.4h2.4v2.4h-2.4zM33.6 4.8h2.4v2.4h-2.4zM12 7.2h2.4v2.4h-2.4zM14.4 7.2h2.4v2.4h-2.4zM26.4 7.2h2.4v2.4h-2.4zM12 9.6h2.4v2.4h-2.4zM57.6 9.6h2.4v2.4h-2.4zM64.8 9.6h2.4v2.4h-2.4zM33.6 12h2.4v2.4h-2.4zM74.4 12h2.4v2.4h-2.4zM14.4 14.4h2.4v2.4h-2.4zM48 14.4h2.4v2.4h-2.4zM0 16.8h2.4v2.4h-2.4zM26.4 16.8h2.4v2.4h-2.4zM48 16.8h2.4v2.4h-2.4zM67.2 16.8h2.4v2.4h-2.4zM19.2 19.2h2.4v2.4h-2.4zM28.8 19.2h2.4v2.4h-2.4zM4.8 21.6h2.4v2.4h-2.4zM7.2 21.6h2.4v2.4h-2.4zM9.6 21.6h2.4v2.4h-2.4zM31.2 21.6h2.4v2.4h-2.4zM43.2 21.6h2.4v2.4h-2.4zM50.4 21.6h2.4v2.4h-2.4zM2.4 24h2.4v2.4h-2.4zM4.8 24h2.4v2.4h-2.4zM48 24h2.4v2.4h-2.4zM67.2 24h2.4v2.4h-2.4zM69.6 24h2.4v2.4h-2.4zM7.2 26.4h2.4v2.4h-2.4zM19.2 26.4h2.4v2.4h-2.4zM64.8 26.4h2.4v2.4h-2.4zM7.2 28.8h2.4v2.4h-2.4zM33.6 28.8h2.4v2.4h-2.4zM45.6 28.8h2.4v2.4h-2.4zM19.2 31.2h2.4v2.4h-2.4zM21.6 31.2h2.4v2.4h-2.4zM45.6 31.2h2.4v2.4h-2.4zM21.6 33.6h2.4v2.4h-2.4zM33.6 33.6h2.4v2.4h-2.4zM60 33.6h2.4v2.4h-2.4zM76.8 33.6h2.4v2.4h-2.4zM0 36h2.4v2.4h-2.4zM12 36h2.4v2.4h-2.4zM67.2 36h2.4v2.4h-2.4zM28.8 38.4h2.4v2.4h-2.4zM43.2 38.4h2.4v2.4h-2.4zM55.2 38.4h2.4v2.4h-2.4zM57.6 38.4h2.4v2.4h-2.4zM67.2 38.4h2.4v2.4h-2.4zM45.6 40.8h2.4v2.4h-2.4zM50.4 40.8h2.4v2.4h-2.4zM74.4 45.6h2.4v2.4h-2.4zM14.4 48h2.4v2.4h-2.4zM50.4 48h2.4v2.4h-2.4zM62.4 48h2.4v2.4h-2.4zM19.2 50.4h2.4v2.4h-2.4zM43.2 52.8h2.4v2.4h-2.4zM14.4 55.2h2.4v2.4h-2.4zM48 55.2h2.4v2.4h-2.4zM19.2 57.6h2.4v2.4h-2.4zM43.2 57.6h2.4v2.4h-2.4zM48 57.6h2.4v2.4h-2.4zM62.4 57.6h2.4v2.4h-2.4zM7.2 60h2.4v2.4h-2.4zM2.4 62.4h2.4v2.4h-2.4zM19.2 62.4h2.4v2.4h-2.4zM40.8 62.4h2.4v2.4h-2.4zM62.4 62.4h2.4v2.4h-2.4zM72 62.4h2.4v2.4h-2.4zM28.8 64.8h2.4v2.4h-2.4zM62.4 67.2h2.4v2.4h-2.4zM64.8 67.2h2.4v2.4h-2.4zM76.8 67.2h2.4v2.4h-2.4zM9.6 69.6h2.4v2.4h-2.4zM16.8 69.6h2.4v2.4h-2.4zM64.8 69.6h2.4v2.4h-2.4zM4.8 72h2.4v2.4h-2.4zM9.6 72h2.4v2.4h-2.4zM36 72h2.4v2.4h-2.4zM72 72h2.4v2.4h-2.4zM4.8 74.4h2.4v2.4h-2.4zM12 74.4h2.4v2.4h-2.4zM0 76.8h2.4v2.4h-2.4zM9.6 79.2h2.4v2.4h-2.4zM16.8 79.2h2.4v2.4h-2.4zM33.6 79.2h2.4v2.4h-2.4zM36 79.2h2.4v2.4h-2.4zM67.2 79.2h2.4v2.4h-2.4zM52.8 81.6h2.4v2.4h-2.4zM74.4 81.6h2.4v2.4h-2.4zM2.4 84h2.4v2.4h-2.4zM31.2 84h2.4v2.4h-2.4zM40.8 84h2.4v2.4h-2.4zM62.4 84h2.4v2.4h-2.4zM67.2 84h2.4v2.4h-2.4zM2.4 86.4h2.4v2.4h-2.4zM36 86.4h2.4v2.4h-2.4zM40.8 86.4h2.4v2.4h-2.4zM43.2 88.8h2.4v2.4h-2.4zM48 88.8h2.4v2.4h-2.4zM0 91.2h2.4v2.4h-2.4zM14.4 91.2h2.4v2.4h-2.4zM36 91.2h2.4v2.4h-2.4zM64.8 91.2h2.4v2.4h-2.4zM74.4 91.2h2.4v2.4h-2.4zM7.2 93.6h2.4v2.4h-2.4zM19.2 93.6h2.4v2.4h-2.4zM4.8 96h2.4v2.4h-2.4zM14.4 96h2.4v2.4h-2.4zM52.8 96h2.4v2.4h-2.4zM24 98.4h2.4v2.4h-2.4zM74.4 98.4h2.4v2.4h-2.4z"/><path fill="#403838" d="M2.4 0h2.4v2.4h-2.4zM9.6 0h2.4v2.4h-2.4zM19.2 0h2.4v2.4h-2.4zM43.2 0h2.4v2.4h-2.4zM76.8 0h2.4v2.4h-2.4zM28.8 2.4h2.4v2.4h-2.4zM57.6 2.4h2.4v2.4h-2.4zM72 2.4h2.4v2.4h-2.4zM21.6 7.2h2.4v2.4h-2.4zM28.8 7.2h2.4v2.4h-2.4zM24 12h2.4v2.4h-2.4zM52.8 12h2.4v2.4h-2.4zM0 14.4h2.4v2.4h-2.4zM16.8 14.4h2.4v2.4h-2.4zM64.8 14.4h2.4v2.4h-2.4zM12 16.8h2.4v2.4h-2.4zM69.6 16.8h2.4v2.4h-2.4zM12 21.6h2.4v2.4h-2.4zM16.8 21.6h2.4v2.4h-2.4zM19.2 21.6h2.4v2.4h-2.4zM72 21.6h2.4v2.4h-2.4zM4.8 26.4h2.4v2.4h-2.4zM14.4 28.8h2.4v2.4h-2.4zM48 28.8h2.4v2.4h-2.4zM64.8 28.8h2.4v2.4h-2.4zM69.6 28.8h2.4v2.4h-2.4zM72 28.8h2.4v2.4h-2.4zM33.6 31.2h2.4v2.4h-2.4zM40.8 31.2h2.4v2.4h-2.4zM0 33.6h2.4v2.4h-2.4zM14.4 33.6h2.4v2.4h-2.4zM26.4 33.6h2.4v2.4h-2.4zM50.4 33.6h2.4v2.4h-2.4zM64.8 33.6h2.4v2.4h-2.4zM69.6 33.6h2.4v2.4h-2.4zM14.4 36h2.4v2.4h-2.4zM16.8 36h2.4v2.4h-2.4zM24 36h2.4v2.4h-2.4zM31.2 36h2.4v2.4h-2.4zM33.6 36h2.4v2.4h-2.4zM36 36h2.4v2.4h-2.4zM57.6 36h2.4v2.4h-2.4zM60 36h2.4v2.4h-2.4zM74.4 36h2.4v2.4h-2.4zM0 38.4h2.4v2.4h-2.4zM12 38.4h2.4v2.4h-2.4zM16.8 38.4h2.4v2.4h-2.4zM21.6 38.4h2.4v2.4h-2.4zM40.8 38.4h2.4v2.4h-2.4zM69.6 38.4h2.4v2.4h-2.4zM60 40.8h2.4v2.4h-2.4zM74.4 40.8h2.4v2.4h-2.4zM9.6 43.2h2.4v2.4h-2.4zM16.8 43.2h2.4v2.4h-2.4zM24 43.2h2.4v2.4h-2.4zM31.2 43.2h2.4v2.4h-2.4zM36 43.2h2.4v2.4h-2.4zM19.2 45.6h2.4v2.4h-2.4zM57.6 45.6h2.4v2.4h-2.4zM64.8 45.6h2.4v2.4h-2.4zM4.8 48h2.4v2.4h-2.4zM9.6 48h2.4v2.4h-2.4zM67.2 48h2.4v2.4h-2.4zM40.8 50.4h2.4v2.4h-2.4zM64.8 50.4h2.4v2.4h-2.4zM14.4 52.8h2.4v2.4h-2.4zM4.8 55.2h2.4v2.4h-2.4zM12 55.2h2.4v2.4h-2.4zM52.8 55.2h2.4v2.4h-2.4zM0 57.6h2.4v2.4h-2.4zM2.4 57.6h2.4v2.4h-2.4zM4.8 57.6h2.4v2.4h-2.4zM9.6 57.6h2.4v2.4h-2.4zM26.4 57.6h2.4v2.4h-2.4zM50.4 57.6h2.4v2.4h-2.4zM69.6 57.6h2.4v2.4h-2.4zM2.4 60h2.4v2.4h-2.4zM14.4 60h2.4v2.4h-2.4zM12 62.4h2.4v2.4h-2.4zM52.8 62.4h2.4v2.4h-2.4zM14.4 64.8h2.4v2.4h-2.4zM33.6 64.8h2.4v2.4h-2.4zM38.4 64.8h2.4v2.4h-2.4zM0 67.2h2.4v2.4h-2.4zM38.4 67.2h2.4v2.4h-2.4zM52.8 67.2h2.4v2.4h-2.4zM45.6 69.6h2.4v2.4h-2.4zM72 69.6h2.4v2.4h-2.4zM7.2 74.4h2.4v2.4h-2.4zM24 74.4h2.4v2.4h-2.4zM62.4 74.4h2.4v2.4h-2.4zM9.6 76.8h2.4v2.4h-2.4zM14.4 76.8h2.4v2.4h-2.4zM36 76.8h2.4v2.4h-2.4zM40.8 76.8h2.4v2.4h-2.4zM12 79.2h2.4v2.4h-2.4zM38.4 79.2h2.4v2.4h-2.4zM69.6 79.2h2.4v2.4h-2.4zM76.8 79.2h2.4v2.4h-2.4zM43.2 81.6h2.4v2.4h-2.4zM36 84h2.4v2.4h-2.4zM57.6 84h2.4v2.4h-2.4zM60 84h2.4v2.4h-2.4zM76.8 84h2.4v2.4h-2.4zM19.2 86.4h2.4v2.4h-2.4zM21.6 86.4h2.4v2.4h-2.4zM67.2 86.4h2.4v2.4h-2.4zM2.4 88.8h2.4v2.4h-2.4zM4.8 88.8h2.4v2.4h-2.4zM38.4 88.8h2.4v2.4h-2.4zM57.6 88.8h2.4v2.4h-2.4zM60 88.8h2.4v2.4h-2.4zM7.2 91.2h2.4v2.4h-2.4zM12 91.2h2.4v2.4h-2.4zM31.2 91.2h2.4v2.4h-2.4zM40.8 93.6h2.4v2.4h-2.4zM52.8 93.6h2.4v2.4h-2.4zM7.2 98.4h2.4v2.4h-2.4zM55.2 98.4h2.4v2.4h-2.4zM0 100.8h2.4v2.4h-2.4zM7.2 100.8h2.4v2.4h-2.4zM26.4 100.8h2.4v2.4h-2.4zM31.2 100.8h2.4v2.4h-2.4zM40.8 100.8h2.4v2.4h-2.4zM43.2 100.8h2.4v2.4h-2.4zM55.2 100.8h2.4v2.4h-2.4z"/><path fill="#b8c8d0" d="M12 0h2.4v2.4h-2.4zM26.4 0h2.4v2.4h-2.4zM52.8 0h2.4v2.4h-2.4zM64.8 0h2.4v2.4h-2.4zM72 0h2.4v2.4h-2.4zM12 2.4h2.4v2.4h-2.4zM24 2.4h2.4v2.4h-2.4zM2.4 4.8h2.4v2.4h-2.4zM48 4.8h2.4v2.4h-2.4zM60 7.2h2.4v2.4h-2.4zM74.4 7.2h2.4v2.4h-2.4zM0 9.6h2.4v2.4h-2.4zM19.2 9.6h2.4v2.4h-2.4zM38.4 9.6h2.4v2.4h-2.4zM48 9.6h2.4v2.4h-2.4zM55.2 9.6h2.4v2.4h-2.4zM62.4 9.6h2.4v2.4h-2.4zM67.2 9.6h2.4v2.4h-2.4zM7.2 12h2.4v2.4h-2.4zM36 12h2.4v2.4h-2.4zM72 12h2.4v2.4h-2.4zM21.6 14.4h2.4v2.4h-2.4zM24 14.4h2.4v2.4h-2.4zM67.2 14.4h2.4v2.4h-2.4zM14.4 16.8h2.4v2.4h-2.4zM19.2 16.8h2.4v2.4h-2.4zM40.8 16.8h2.4v2.4h-2.4zM31.2 19.2h2.4v2.4h-2.4zM36 19.2h2.4v2.4h-2.4zM45.6 19.2h2.4v2.4h-2.4zM50.4 19.2h2.4v2.4h-2.4zM2.4 21.6h2.4v2.4h-2.4zM26.4 21.6h2.4v2.4h-2.4zM45.6 21.6h2.4v2.4h-2.4zM67.2 21.6h2.4v2.4h-2.4zM36 24h2.4v2.4h-2.4zM16.8 26.4h2.4v2.4h-2.4zM31.2 26.4h2.4v2.4h-2.4zM43.2 26.4h2.4v2.4h-2.4zM52.8 26.4h2.4v2.4h-2.4zM74.4 28.8h2.4v2.4h-2.4zM36 31.2h2.4v2.4h-2.4zM2.4 36h2.4v2.4h-2.4zM48 36h2.4v2.4h-2.4zM64.8 36h2.4v2.4h-2.4zM4.8 38.4h2.4v2.4h-2.4zM24 38.4h2.4v2.4h-2.4zM2.4 40.8h2.4v2.4h-2.4zM43.2 40.8h2.4v2.4h-2.4zM55.2 40.8h2.4v2.4h-2.4zM62.4 40.8h2.4v2.4h-2.4zM12 43.2h2.4v2.4h-2.4zM38.4 43.2h2.4v2.4h-2.4zM40.8 43.2h2.4v2.4h-2.4zM60 43.2h2.4v2.4h-2.4zM43.2 45.6h2.4v2.4h-2.4zM7.2 48h2.4v2.4h-2.4zM12 48h2.4v2.4h-2.4zM40.8 48h2.4v2.4h-2.4zM76.8 48h2.4v2.4h-2.4zM33.6 50.4h2.4v2.4h-2.4zM57.6 50.4h2.4v2.4h-2.4zM60 50.4h2.4v2.4h-2.4zM67.2 50.4h2.4v2.4h-2.4zM55.2 52.8h2.4v2.4h-2.4zM0 55.2h2.4v2.4h-2.4zM28.8 55.2h2.4v2.4h-2.4zM36 55.2h2.4v2.4h-2.4zM12 57.6h2.4v2.4h-2.4zM28.8 57.6h2.4v2.4h-2.4zM52.8 57.6h2.4v2.4h-2.4zM55.2 57.6h2.4v2.4h-2.4zM74.4 57.6h2.4v2.4h-2.4zM36 60h2.4v2.4h-2.4zM64.8 60h2.4v2.4h-2.4zM26.4 62.4h2.4v2.4h-2.4zM36 62.4h2.4v2.4h-2.4zM74.4 62.4h2.4v2.4h-2.4zM2.4 64.8h2.4v2.4h-2.4zM40.8 64.8h2.4v2.4h-2.4zM50.4 64.8h2.4v2.4h-2.4zM57.6 64.8h2.4v2.4h-2.4zM62.4 64.8h2.4v2.4h-2.4zM28.8 67.2h2.4v2.4h-2.4zM12 69.6h2.4v2.4h-2.4zM38.4 69.6h2.4v2.4h-2.4zM60 69.6h2.4v2.4h-2.4zM0 72h2.4v2.4h-2.4zM2.4 72h2.4v2.4h-2.4zM26.4 72h2.4v2.4h-2.4zM74.4 72h2.4v2.4h-2.4zM76.8 72h2.4v2.4h-2.4zM45.6 74.4h2.4v2.4h-2.4zM55.2 74.4h2.4v2.4h-2.4zM67.2 74.4h2.4v2.4h-2.4zM69.6 74.4h2.4v2.4h-2.4zM19.2 76.8h2.4v2.4h-2.4zM33.6 76.8h2.4v2.4h-2.4zM48 79.2h2.4v2.4h-2.4zM0 84h2.4v2.4h-2.4zM21.6 84h2.4v2.4h-2.4zM26.4 84h2.4v2.4h-2.4zM33.6 84h2.4v2.4h-2.4zM50.4 86.4h2.4v2.4h-2.4zM76.8 86.4h2.4v2.4h-2.4zM12 88.8h2.4v2.4h-2.4zM33.6 88.8h2.4v2.4h-2.4zM55.2 88.8h2.4v2.4h-2.4zM14.4 93.6h2.4v2.4h-2.4zM28.8 93.6h2.4v2.4h-2.4zM2.4 96h2.4v2.4h-2.4zM26.4 96h2.4v2.4h-2.4zM55.2 96h2.4v2.4h-2.4zM31.2 98.4h2.4v2.4h-2.4zM40.8 98.4h2.4v2.4h-2.4zM52.8 98.4h2.4v2.4h-2.4zM16.8 100.8h2.4v2.4h-2.4zM38.4 100.8h2.4v2.4h-2.4zM48 100.8h2.4v2.4h-2.4zM64.8 100.8h2.4v2.4h-2.4z"/><path fill="#70506a" d="M24 0h2.4v2.4h-2.4zM48 0h2.4v2.4h-2.4zM60 0h2.4v2.4h-2.4zM67.2 0h2.4v2.4h-2.4zM33.6 2.4h2.4v2.4h-2.4zM43.2 2.4h2.4v2.4h-2.4zM50.4 2.4h2.4v2.4h-2.4zM21.6 4.8h2.4v2.4h-2.4zM50.4 4.8h2.4v2.4h-2.4zM55.2 4.8h2.4v2.4h-2.4zM19.2 7.2h2.4v2.4h-2.4zM40.8 7.2h2.4v2.4h-2.4zM76.8 7.2h2.4v2.4h-2.4zM40.8 9.6h2.4v2.4h-2.4zM76.8 9.6h2.4v2.4h-2.4zM21.6 12h2.4v2.4h-2.4zM28.8 12h2.4v2.4h-2.4zM19.2 14.4h2.4v2.4h-2.4zM4.8 16.8h2.4v2.4h-2.4zM43.2 16.8h2.4v2.4h-2.4zM16.8 19.2h2.4v2.4h-2.4zM38.4 19.2h2.4v2.4h-2.4zM60 19.2h2.4v2.4h-2.4zM48 21.6h2.4v2.4h-2.4zM64.8 21.6h2.4v2.4h-2.4zM0 24h2.4v2.4h-2.4zM14.4 24h2.4v2.4h-2.4zM21.6 24h2.4v2.4h-2.4zM2.4 26.4h2.4v2.4h-2.4zM9.6 26.4h2.4v2.4h-2.4zM36 26.4h2.4v2.4h-2.4zM50.4 26.4h2.4v2.4h-2.4zM57.6 26.4h2.4v2.4h-2.4zM2.4 28.8h2.4v2.4h-2.4zM12 28.8h2.4v2.4h-2.4zM16.8 28.8h2.4v2.4h-2.4zM19.2 28.8h2.4v2.4h-2.4zM26.4 28.8h2.4v2.4h-2.4zM26.4 31.2h2.4v2.4h-2.4zM38.4 31.2h2.4v2.4h-2.4zM50.4 31.2h2.4v2.4h-2.4zM60 31.2h2.4v2.4h-2.4zM55.2 33.6h2.4v2.4h-2.4zM72 33.6h2.4v2.4h-2.4zM26.4 36h2.4v2.4h-2.4zM43.2 36h2.4v2.4h-2.4zM28.8 40.8h2.4v2.4h-2.4zM4.8 43.2h2.4v2.4h-2.4zM21.6 43.2h2.4v2.4h-2.4zM26.4 43.2h2.4v2.4h-2.4zM50.4 43.2h2.4v2.4h-2.4zM31.2 45.6h2.4v2.4h-2.4zM33.6 45.6h2.4v2.4h-2.4zM45.6 45.6h2.4v2.4h-2.4zM60 45.6h2.4v2.4h-2.4zM67.2 45.6h2.4v2.4h-2.4zM36 48h2.4v2.4h-2.4zM48 48h2.4v2.4h-2.4zM4.8 50.4h2.4v2.4h-2.4zM52.8 50.4h2.4v2.4h-2.4zM52.8 52.8h2.4v2.4h-2.4zM64.8 52.8h2.4v2.4h-2.4zM74.4 52.8h2.4v2.4h-2.4zM16.8 55.2h2.4v2.4h-2.4zM60 55.2h2.4v2.4h-2.4zM16.8 57.6h2.4v2.4h-2.4zM21.6 57.6h2.4v2.4h-2.4zM31.2 57.6h2.4v2.4h-2.4zM9.6 60h2.4v2.4h-2.4zM19.2 60h2.4v2.4h-2.4zM40.8 60h2.4v2.4h-2.4zM48 60h2.4v2.4h-2.4zM67.2 62.4h2.4v2.4h-2.4zM0 64.8h2.4v2.4h-2.4zM4.8 64.8h2.4v2.4h-2.4zM52.8 64.8h2.4v2.4h-2.4zM67.2 64.8h2.4v2.4h-2.4zM2.4 67.2h2.4v2.4h-2.4zM7.2 67.2h2.4v2.4h-2.4zM12 67.2h2.4v2.4h-2.4zM48 67.2h2.4v2.4h-2.4zM57.6 67.2h2.4v2.4h-2.4zM36 69.6h2.4v2.4h-2.4zM55.2 69.6h2.4v2.4h-2.4zM7.2 72h2.4v2.4h-2.4zM24 72h2.4v2.4h-2.4zM55.2 72h2.4v2.4h-2.4zM0 74.4h2.4v2.4h-2.4zM40.8 74.4h2.4v2.4h-2.4zM26.4 76.8h2.4v2.4h-2.4zM64.8 76.8h2.4v2.4h-2.4zM67.2 76.8h2.4v2.4h-2.4zM76.8 76.8h2.4v2.4h-2.4zM28.8 79.2h2.4v2.4h-2.4zM55.2 79.2h2.4v2.4h-2.4zM72 79.2h2.4v2.4h-2.4zM24 81.6h2.4v2.4h-2.4zM28.8 81.6h2.4v2.4h-2.4zM64.8 81.6h2.4v2.4h-2.4zM55.2 84h2.4v2.4h-2.4zM74.4 84h2.4v2.4h-2.4zM28.8 86.4h2.4v2.4h-2.4zM72 86.4h2.4v2.4h-2.4zM74.4 88.8h2.4v2.4h-2.4zM38.4 91.2h2.4v2.4h-2.4zM50.4 91.2h2.4v2.4h-2.4zM57.6 91.2h2.4v2.4h-2.4zM62.4 91.2h2.4v2.4h-2.4zM72 91.2h2.4v2.4h-2.4zM36 93.6h2.4v2.4h-2.4zM55.2 93.6h2.4v2.4h-2.4zM9.6 96h2.4v2.4h-2.4zM33.6 96h2.4v2.4h-2.4zM36 96h2.4v2.4h-2.4zM12 98.4h2.4v2.4h-2.4zM50.4 98.4h2.4v2.4h-2.4zM72 98.4h2.4v2.4h-2.4zM69.6 100.8h2.4v2.4h-2.4zM72 100.8h2.4v2.4h-2.4z"/><path fill="#2e8a9a" d="M45.6 0h2.4v2.4h-2.4zM62.4 0h2.4v2.4h-2.4zM62.4 2.4h2.4v2.4h-2.4zM38.4 4.8h2.4v2.4h-2.4zM2.4 7.2h2.4v2.4h-2.4zM33.6 7.2h2.4v2.4h-2.4zM12 12h2.4v2.4h-2.4zM19.2 12h2.4v2.4h-2.4zM60 12h2.4v2.4h-2.4zM62.4 12h2.4v2.4h-2.4zM4.8 14.4h2.4v2.4h-2.4zM36 14.4h2.4v2.4h-2.4zM7.2 16.8h2.4v2.4h-2.4zM9.6 16.8h2.4v2.4h-2.4zM31.2 16.8h2.4v2.4h-2.4zM52.8 16.8h2.4v2.4h-2.4zM74.4 16.8h2.4v2.4h-2.4zM0 19.2h2.4v2.4h-2.4zM2.4 19.2h2.4v2.4h-2.4zM4.8 19.2h2.4v2.4h-2.4zM69.6 19.2h2.4v2.4h-2.4zM76.8 19.2h2.4v2.4h-2.4zM0 21.6h2.4v2.4h-2.4zM38.4 21.6h2.4v2.4h-2.4zM55.2 24h2.4v2.4h-2.4zM14.4 26.4h2.4v2.4h-2.4zM38.4 26.4h2.4v2.4h-2.4zM40.8 28.8h2.4v2.4h-2.4zM50.4 28.8h2.4v2.4h-2.4zM67.2 28.8h2.4v2.4h-2.4zM2.4 31.2h2.4v2.4h-2.4zM12 31.2h2.4v2.4h-2.4zM57.6 31.2h2.4v2.4h-2.4zM62.4 31.2h2.4v2.4h-2.4zM7.2 33.6h2.4v2.4h-2.4zM67.2 33.6h2.4v2.4h-2.4zM74.4 33.6h2.4v2.4h-2.4zM4.8 36h2.4v2.4h-2.4zM21.6 36h2.4v2.4h-2.4zM33.6 38.4h2.4v2.4h-2.4zM12 40.8h2.4v2.4h-2.4zM36 40.8h2.4v2.4h-2.4zM52.8 40.8h2.4v2.4h-2.4zM67.2 40.8h2.4v2.4h-2.4zM72 40.8h2.4v2.4h-2.4zM48 43.2h2.4v2.4h-2.4zM2.4 45.6h2.4v2.4h-2.4zM21.6 45.6h2.4v2.4h-2.4zM55.2 45.6h2.4v2.4h-2.4zM7.2 50.4h2.4v2.4h-2.4zM24 50.4h2.4v2.4h-2.4zM50.4 50.4h2.4v2.4h-2.4zM0 52.8h2.4v2.4h-2.4zM2.4 52.8h2.4v2.4h-2.4zM16.8 52.8h2.4v2.4h-2.4zM31.2 52.8h2.4v2.4h-2.4zM21.6 55.2h2.4v2.4h-2.4zM40.8 55.2h2.4v2.4h-2.4zM21.6 60h2.4v2.4h-2.4zM24 60h2.4v2.4h-2.4zM57.6 60h2.4v2.4h-2.4zM67.2 60h2.4v2.4h-2.4zM0 62.4h2.4v2.4h-2.4zM16.8 62.4h2.4v2.4h-2.4zM28.8 62.4h2.4v2.4h-2.4zM12 64.8h2.4v2.4h-2.4zM21.6 64.8h2.4v2.4h-2.4zM55.2 64.8h2.4v2.4h-2.4zM60 64.8h2.4v2.4h-2.4zM0 69.6h2.4v2.4h-2.4zM21.6 69.6h2.4v2.4h-2.4zM48 69.6h2.4v2.4h-2.4zM31.2 72h2.4v2.4h-2.4zM38.4 72h2.4v2.4h-2.4zM40.8 72h2.4v2.4h-2.4zM57.6 72h2.4v2.4h-2.4zM69.6 72h2.4v2.4h-2.4zM21.6 74.4h2.4v2.4h-2.4zM52.8 74.4h2.4v2.4h-2.4zM52.8 76.8h2.4v2.4h-2.4zM74.4 76.8h2.4v2.4h-2.4zM4.8 79.2h2.4v2.4h-2.4zM40.8 79.2h2.4v2.4h-2.4zM45.6 79.2h2.4v2.4h-2.4zM2.4 81.6h2.4v2.4h-2.4zM19.2 81.6h2.4v2.4h-2.4zM57.6 81.6h2.4v2.4h-2.4zM28.8 84h2.4v2.4h-2.4zM45.6 86.4h2.4v2.4h-2.4zM74.4 86.4h2.4v2.4h-2.4zM36 88.8h2.4v2.4h-2.4zM45.6 88.8h2.4v2.4h-2.4zM52.8 88.8h2.4v2.4h-2.4zM40.8 91.2h2.4v2.4h-2.4zM67.2 91.2h2.4v2.4h-2.4zM2.4 93.6h2.4v2.4h-2.4zM4.8 93.6h2.4v2.4h-2.4zM24 93.6h2.4v2.4h-2.4zM43.2 93.6h2.4v2.4h-2.4zM69.6 93.6h2.4v2.4h-2.4zM7.2 96h2.4v2.4h-2.4zM38.4 96h2.4v2.4h-2.4zM57.6 96h2.4v2.4h-2.4zM19.2 98.4h2.4v2.4h-2.4zM36 98.4h2.4v2.4h-2.4zM43.2 98.4h2.4v2.4h-2.4zM19.2 100.8h2.4v2.4h-2.4zM50.4 100.8h2.4v2.4h-2.4zM57.6 100.8h2.4v2.4h-2.4zM60 100.8h2.4v2.4h-2.4z"/></svg><svg x="76.8" y="16" width="77.1" height="102" viewBox="0 0 77.1 102" overflow="hidden"><rect width="77" height="102" fill="url(#fogg)"/><ellipse cx="10.5" cy="28.7" rx="9.3" ry="6.2" fill="#7a6048" opacity="0.7"/><ellipse cx="71.5" cy="21.7" rx="9.7" ry="5.5" fill="#94785e" opacity="0.7"/><ellipse cx="18.4" cy="34.2" rx="10.4" ry="5.5" fill="#6e5a44" opacity="0.7"/><ellipse cx="13" cy="44.7" rx="13.2" ry="8.8" fill="#94785e" opacity="0.7"/><ellipse cx="9.4" cy="49.5" rx="8.3" ry="7.9" fill="#94785e" opacity="0.7"/><ellipse cx="58.4" cy="21.8" rx="7.3" ry="5.9" fill="#7a6048" opacity="0.7"/><ellipse cx="35" cy="24.2" rx="12.3" ry="11.8" fill="#94785e" opacity="0.7"/><ellipse cx="23.7" cy="40.3" rx="11.9" ry="8.2" fill="#7a6048" opacity="0.7"/><ellipse cx="12.2" cy="24.7" rx="6.3" ry="4.8" fill="#7a6048" opacity="0.7"/><ellipse cx="43.9" cy="10.4" rx="10.2" ry="6.4" fill="#6e5a44" opacity="0.7"/><ellipse cx="4.1" cy="47" rx="11.8" ry="10.5" fill="#8a6a50" opacity="0.7"/><ellipse cx="73.9" cy="36" rx="9.8" ry="6.9" fill="#8a6a50" opacity="0.7"/><ellipse cx="57.9" cy="29.1" rx="14" ry="12.8" fill="#8a6a50" opacity="0.7"/><ellipse cx="63.5" cy="7" rx="6.9" ry="6.7" fill="#6e5a44" opacity="0.7"/><ellipse cx="40.4" cy="85" rx="9.4" ry="6.2" fill="#a89080" opacity="0.55"/><ellipse cx="22.8" cy="90.5" rx="6.6" ry="4.5" fill="#b0a090" opacity="0.55"/><ellipse cx="57.9" cy="81.1" rx="7.6" ry="4" fill="#a89080" opacity="0.55"/><ellipse cx="65" cy="79.3" rx="9.2" ry="9.1" fill="#7a5a48" opacity="0.55"/><ellipse cx="53.5" cy="87.8" rx="5.4" ry="3.5" fill="#7a5a48" opacity="0.55"/><ellipse cx="72.4" cy="98.4" rx="10" ry="8.7" fill="#b0a090" opacity="0.55"/><ellipse cx="66.7" cy="84.6" rx="8.8" ry="5.4" fill="#7a5a48" opacity="0.55"/><ellipse cx="43.6" cy="99.1" rx="4.6" ry="4.1" fill="#a89080" opacity="0.55"/><ellipse cx="67.9" cy="89.3" rx="6.7" ry="4.4" fill="#b0a090" opacity="0.55"/><ellipse cx="1.8" cy="77.2" rx="6.6" ry="4.8" fill="#7a5a48" opacity="0.55"/><path d="M26.9,7 L53.1,7 L53.1,15 C59.5,16 60.5,19 60.5,24 L60.5,80 Q60.5,88 51.5,88 L28.5,88 Q19.5,88 19.5,80 L19.5,24 C19.5,19 20.5,16 26.9,15 Z" fill="#e0ecec" fill-opacity="0.2" stroke="#eef4f4" stroke-opacity="0.5" stroke-width="1"/><rect x="26.9" y="9" width="26.2" height="2" fill="#f0f4f4" opacity="0.35"/><rect x="26.9" y="12" width="26.2" height="1.6" fill="#f0f4f4" opacity="0.3"/><ellipse cx="36" cy="58" rx="5" ry="17" fill="#6a7a38" opacity="0.45"/><ellipse cx="44" cy="60" rx="5" ry="15" fill="#c07a30" opacity="0.5"/><rect x="23" y="26" width="2" height="46" rx="1" fill="#fff" opacity="0.3"/></svg><svg x="153.7" y="16" width="77.1" height="102" viewBox="0 0 77.1 102" overflow="hidden"><rect width="77" height="102" fill="url(#fogg)"/><ellipse cx="10.9" cy="41.5" rx="7.8" ry="5.1" fill="#8a6a50" opacity="0.7"/><ellipse cx="69.2" cy="18.5" rx="10" ry="9.7" fill="#8a6a50" opacity="0.7"/><ellipse cx="67.7" cy="12.2" rx="12.9" ry="10.9" fill="#7a6048" opacity="0.7"/><ellipse cx="15.1" cy="50.3" rx="8.8" ry="6.5" fill="#94785e" opacity="0.7"/><ellipse cx="48.9" cy="41.9" rx="10.5" ry="8" fill="#94785e" opacity="0.7"/><ellipse cx="14.7" cy="52.8" rx="6.4" ry="3.5" fill="#6e5a44" opacity="0.7"/><ellipse cx="74" cy="16.4" rx="9.4" ry="8.8" fill="#6e5a44" opacity="0.7"/><ellipse cx="53.6" cy="56.3" rx="9.6" ry="5.2" fill="#94785e" opacity="0.7"/><ellipse cx="66.3" cy="7.2" rx="11.5" ry="7.3" fill="#94785e" opacity="0.7"/><ellipse cx="38.6" cy="17.7" rx="8.2" ry="7.4" fill="#7a6048" opacity="0.7"/><ellipse cx="45.4" cy="13.7" rx="8.4" ry="8.1" fill="#94785e" opacity="0.7"/><ellipse cx="21.3" cy="38.4" rx="6.7" ry="6.7" fill="#8a6a50" opacity="0.7"/><ellipse cx="70.6" cy="4.4" rx="13.3" ry="6.7" fill="#6e5a44" opacity="0.7"/><ellipse cx="41.4" cy="25.4" rx="10.5" ry="6.1" fill="#94785e" opacity="0.7"/><ellipse cx="7.4" cy="15.4" rx="6.7" ry="4" fill="#5a6a38" opacity="0.8"/><ellipse cx="29.6" cy="1.8" rx="6.3" ry="5.5" fill="#6a7040" opacity="0.8"/><ellipse cx="0.1" cy="49" rx="4.3" ry="2.3" fill="#4a5a30" opacity="0.8"/><ellipse cx="27.3" cy="17.6" rx="6.4" ry="3.3" fill="#6a7040" opacity="0.8"/><ellipse cx="15.2" cy="46.5" rx="7.4" ry="5.6" fill="#4a5a30" opacity="0.8"/><ellipse cx="5.2" cy="42.9" rx="4.8" ry="3.9" fill="#5a6a38" opacity="0.8"/><ellipse cx="20.1" cy="30.1" rx="5.3" ry="4.5" fill="#4a5a30" opacity="0.8"/><ellipse cx="7.1" cy="26.9" rx="5.1" ry="4" fill="#6a7040" opacity="0.8"/><ellipse cx="7.8" cy="11.1" rx="8.9" ry="4.7" fill="#6a7040" opacity="0.8"/><ellipse cx="26.2" cy="9.9" rx="4.8" ry="2.4" fill="#6a7040" opacity="0.8"/><ellipse cx="24.2" cy="27.7" rx="7.6" ry="7.1" fill="#5a6a38" opacity="0.8"/><ellipse cx="2.2" cy="49.9" rx="6.8" ry="5.3" fill="#4a5a30" opacity="0.8"/><rect x="60" y="0" width="3" height="62" fill="#4a3a30" opacity="0.6"/><rect x="68" y="0" width="3" height="58" fill="#4a3a30" opacity="0.6"/><rect x="0" y="56" width="25" height="12" fill="#5a6a60" opacity="0.5"/><ellipse cx="18.3" cy="76.4" rx="5.9" ry="3.1" fill="#b0a090" opacity="0.55"/><ellipse cx="63.1" cy="94.2" rx="8.7" ry="7.7" fill="#7a5a48" opacity="0.55"/><ellipse cx="6.8" cy="96.6" rx="5" ry="3.2" fill="#8a6a58" opacity="0.55"/><ellipse cx="38.3" cy="91.8" rx="7.6" ry="5.5" fill="#b0a090" opacity="0.55"/><ellipse cx="31.6" cy="82.9" rx="5.3" ry="5.2" fill="#a89080" opacity="0.55"/><ellipse cx="9.9" cy="94.7" rx="7.6" ry="4.3" fill="#7a5a48" opacity="0.55"/><ellipse cx="40.2" cy="101.6" rx="4" ry="2.8" fill="#8a6a58" opacity="0.55"/><ellipse cx="7" cy="88.7" rx="6.8" ry="6.6" fill="#a89080" opacity="0.55"/><ellipse cx="52.3" cy="93.5" rx="9.9" ry="7.9" fill="#b0a090" opacity="0.55"/><ellipse cx="19.5" cy="88.6" rx="5.5" ry="4" fill="#8a6a58" opacity="0.55"/><path d="M28,7 L52,7 L52,15 C57.8,16 58.8,19 58.8,24 L58.8,80 Q58.8,88 49.8,88 L30.2,88 Q21.2,88 21.2,80 L21.2,24 C21.2,19 22.2,16 28,15 Z" fill="#e0ecec" fill-opacity="0.2" stroke="#eef4f4" stroke-opacity="0.5" stroke-width="1"/><rect x="28" y="9" width="24" height="2" fill="#f0f4f4" opacity="0.35"/><rect x="28" y="12" width="24" height="1.6" fill="#f0f4f4" opacity="0.3"/><rect x="23.8" y="29" width="32.5" height="56" rx="7" fill="url(#tre)"/><ellipse cx="33.5" cy="50.3" rx="6" ry="15" fill="#4a7a28" opacity="0.85"/><ellipse cx="43.2" cy="47.5" rx="7" ry="12" fill="#d8921a" opacity="0.9"/><ellipse cx="46.5" cy="61.5" rx="7" ry="6" fill="#c83a28" opacity="0.7"/><ellipse cx="40" cy="74.9" rx="9.8" ry="5" fill="#d8e8e0" opacity="0.45"/><rect x="24.8" y="26" width="2" height="46" rx="1" fill="#fff" opacity="0.3"/></svg><svg x="230.5" y="16" width="77.1" height="102" viewBox="0 0 77.1 102" overflow="hidden"><rect width="77" height="102" fill="url(#fogg)"/><ellipse cx="28" cy="20.2" rx="13.8" ry="11.2" fill="#7a6048" opacity="0.7"/><ellipse cx="12.4" cy="35.1" rx="14" ry="12.1" fill="#94785e" opacity="0.7"/><ellipse cx="35.6" cy="23.6" rx="12.7" ry="8.8" fill="#7a6048" opacity="0.7"/><ellipse cx="16.6" cy="20.8" rx="7.5" ry="5.8" fill="#94785e" opacity="0.7"/><ellipse cx="37" cy="24" rx="10.8" ry="9.5" fill="#8a6a50" opacity="0.7"/><ellipse cx="34.4" cy="59.6" rx="11.4" ry="10.6" fill="#94785e" opacity="0.7"/><ellipse cx="41.6" cy="25.2" rx="6.4" ry="4.1" fill="#6e5a44" opacity="0.7"/><ellipse cx="47.8" cy="31.1" rx="11.9" ry="9" fill="#94785e" opacity="0.7"/><ellipse cx="20.7" cy="21.7" rx="7.2" ry="7" fill="#6e5a44" opacity="0.7"/><ellipse cx="10.6" cy="14.5" rx="12.7" ry="7.1" fill="#6e5a44" opacity="0.7"/><ellipse cx="64.6" cy="27" rx="12.8" ry="8.9" fill="#6e5a44" opacity="0.7"/><ellipse cx="59.3" cy="31.2" rx="6.4" ry="4.5" fill="#94785e" opacity="0.7"/><ellipse cx="37.6" cy="11.3" rx="10.1" ry="5.7" fill="#94785e" opacity="0.7"/><ellipse cx="24" cy="25.4" rx="10.4" ry="5.9" fill="#6e5a44" opacity="0.7"/><rect x="0" y="0" width="36" height="46" fill="#566a3c"/><ellipse cx="11.3" cy="20.3" rx="4.9" ry="4.6" fill="#6a8a48" opacity="0.9"/><ellipse cx="19.3" cy="20.2" rx="3.7" ry="2.8" fill="#6a8a48" opacity="0.9"/><ellipse cx="8.1" cy="13.1" rx="4.7" ry="2.9" fill="#3a5a2a" opacity="0.9"/><ellipse cx="30.5" cy="33.6" rx="5.4" ry="2.7" fill="#7a5a3a" opacity="0.9"/><ellipse cx="10.7" cy="30.2" rx="7.6" ry="4.6" fill="#7a5a3a" opacity="0.9"/><ellipse cx="12.7" cy="5.5" rx="6.9" ry="4.7" fill="#7a5a3a" opacity="0.9"/><ellipse cx="9.3" cy="36" rx="3.6" ry="2.7" fill="#6a8a48" opacity="0.9"/><ellipse cx="13.8" cy="14.8" rx="5.5" ry="3.5" fill="#3a5a2a" opacity="0.9"/><ellipse cx="33.3" cy="9.1" rx="6.8" ry="4.6" fill="#7a5a3a" opacity="0.9"/><ellipse cx="8.6" cy="4.2" rx="4.7" ry="3.3" fill="#3a5a2a" opacity="0.9"/><ellipse cx="17.2" cy="11.6" rx="7.3" ry="4.8" fill="#3a5a2a" opacity="0.9"/><ellipse cx="32.5" cy="5.4" rx="7.5" ry="7.2" fill="#6a8a48" opacity="0.9"/><rect x="52" y="0" width="25" height="66" fill="#8a8078"/><rect x="58" y="0" width="4" height="66" fill="#6a5a50"/><rect x="0" y="66" width="77" height="36" fill="#a08a78"/><rect x="0" y="40" width="24" height="30" rx="3" fill="#c8d0d0" opacity="0.35"/><rect x="1" y="58" width="21" height="10" fill="#48b8c0" opacity="0.75"/><rect x="61" y="40" width="14" height="32" rx="3" fill="#c0b080" opacity="0.45"/><rect x="61" y="60" width="14" height="12" fill="#5a40a0" opacity="0.85"/><ellipse cx="4.2" cy="86.9" rx="7.5" ry="5.5" fill="#b0a090" opacity="0.55"/><ellipse cx="68.2" cy="74.2" rx="4.2" ry="2.8" fill="#b0a090" opacity="0.55"/><ellipse cx="43.6" cy="79.9" rx="8" ry="4.7" fill="#7a5a48" opacity="0.55"/><ellipse cx="29.6" cy="82.2" rx="9.4" ry="4.8" fill="#8a6a58" opacity="0.55"/><ellipse cx="59.4" cy="90.8" rx="7.7" ry="5.4" fill="#7a5a48" opacity="0.55"/><ellipse cx="4.9" cy="74.1" rx="6.8" ry="4.9" fill="#7a5a48" opacity="0.55"/><ellipse cx="2.9" cy="76.1" rx="7" ry="4.6" fill="#b0a090" opacity="0.55"/><ellipse cx="36.4" cy="72.6" rx="7.6" ry="4.8" fill="#b0a090" opacity="0.55"/><ellipse cx="52.4" cy="79" rx="4" ry="3.1" fill="#7a5a48" opacity="0.55"/><ellipse cx="0.3" cy="88.4" rx="9.1" ry="8" fill="#a89080" opacity="0.55"/><path d="M29.4,7 L52.4,7 L52.4,15 C57.9,16 58.9,19 58.9,24 L58.9,80 Q58.9,88 49.9,88 L31.9,88 Q22.9,88 22.9,80 L22.9,24 C22.9,19 23.9,16 29.4,15 Z" fill="#e0ecec" fill-opacity="0.2" stroke="#eef4f4" stroke-opacity="0.5" stroke-width="1"/><rect x="29.4" y="9" width="23" height="2" fill="#f0f4f4" opacity="0.35"/><rect x="29.4" y="12" width="23" height="1.6" fill="#f0f4f4" opacity="0.3"/><rect x="25.4" y="29" width="31" height="56" rx="7" fill="url(#tre)"/><ellipse cx="34.7" cy="50.3" rx="6" ry="15" fill="#4a7a28" opacity="0.85"/><ellipse cx="44" cy="47.5" rx="7" ry="12" fill="#d8921a" opacity="0.9"/><ellipse cx="47.1" cy="61.5" rx="7" ry="6" fill="#c83a28" opacity="0.7"/><ellipse cx="40.9" cy="74.9" rx="9.3" ry="5" fill="#d8e8e0" opacity="0.45"/><rect x="26.4" y="26" width="2" height="46" rx="1" fill="#fff" opacity="0.3"/></svg><svg x="307.3" y="16" width="77.1" height="102" viewBox="0 0 77.1 102" overflow="hidden"><rect width="77" height="102" fill="#3a5a2c"/><rect x="0" y="45" width="54" height="30" fill="#24401e" opacity="0.7"/><ellipse cx="33.7" cy="25.2" rx="5.8" ry="5.7" fill="#4a7a30" opacity="0.85"/><ellipse cx="14.3" cy="4.7" rx="2.6" ry="2.3" fill="#6a9a40" opacity="0.85"/><ellipse cx="37.6" cy="30.9" rx="6.4" ry="5.8" fill="#6a9a40" opacity="0.85"/><ellipse cx="18" cy="31" rx="5.7" ry="3.7" fill="#7aa84a" opacity="0.85"/><ellipse cx="15.4" cy="33.7" rx="4.6" ry="2.9" fill="#6a9a40" opacity="0.85"/><ellipse cx="19.6" cy="31.8" rx="6.2" ry="5.4" fill="#5a8a38" opacity="0.85"/><ellipse cx="53.4" cy="36.8" rx="6" ry="4" fill="#7aa84a" opacity="0.85"/><ellipse cx="27.7" cy="30.6" rx="2.7" ry="2.2" fill="#7aa84a" opacity="0.85"/><ellipse cx="47" cy="2.4" rx="3.5" ry="2.6" fill="#7aa84a" opacity="0.85"/><ellipse cx="13.7" cy="28.6" rx="4" ry="3.3" fill="#6a9a40" opacity="0.85"/><ellipse cx="18" cy="34.2" rx="5.9" ry="5.4" fill="#2e4a22" opacity="0.85"/><ellipse cx="53.1" cy="28.9" rx="3" ry="2.6" fill="#4a7a30" opacity="0.85"/><ellipse cx="43.3" cy="5.6" rx="4" ry="3.3" fill="#6a9a40" opacity="0.85"/><ellipse cx="35.2" cy="43.8" rx="4.4" ry="3.7" fill="#6a9a40" opacity="0.85"/><ellipse cx="14.5" cy="12.2" rx="3.5" ry="2.9" fill="#7aa84a" opacity="0.85"/><ellipse cx="50.4" cy="44.5" rx="2.7" ry="2.3" fill="#5a8a38" opacity="0.85"/><ellipse cx="47" cy="8.7" rx="3.9" ry="3" fill="#5a8a38" opacity="0.85"/><ellipse cx="21.8" cy="40.7" rx="5.8" ry="5.4" fill="#6a9a40" opacity="0.85"/><ellipse cx="20.2" cy="13.9" rx="5.7" ry="5.2" fill="#4a7a30" opacity="0.85"/><ellipse cx="12.1" cy="32.5" rx="4.1" ry="2.4" fill="#2e4a22" opacity="0.85"/><ellipse cx="21" cy="31.2" rx="4.7" ry="4.2" fill="#6a9a40" opacity="0.85"/><ellipse cx="23.9" cy="37.5" rx="4.7" ry="4.5" fill="#7aa84a" opacity="0.85"/><ellipse cx="23.4" cy="44.9" rx="5.6" ry="3.6" fill="#1e3018" opacity="0.85"/><ellipse cx="7.8" cy="60" rx="3.5" ry="2.1" fill="#3e6a2c" opacity="0.85"/><ellipse cx="10.9" cy="57.6" rx="4.5" ry="2.6" fill="#2a4a22" opacity="0.85"/><ellipse cx="48.2" cy="49.9" rx="2.8" ry="1.6" fill="#3e6a2c" opacity="0.85"/><ellipse cx="7.5" cy="65.2" rx="6" ry="4.2" fill="#2a4a22" opacity="0.85"/><ellipse cx="22.4" cy="65.8" rx="3.9" ry="2.1" fill="#1e3018" opacity="0.85"/><ellipse cx="33.3" cy="66.5" rx="3.4" ry="2" fill="#3e6a2c" opacity="0.85"/><ellipse cx="46.7" cy="71.8" rx="4.1" ry="3.7" fill="#1e3018" opacity="0.85"/><ellipse cx="2.5" cy="67.4" rx="5.8" ry="4.5" fill="#1e3018" opacity="0.85"/><ellipse cx="4" cy="51.5" rx="5.1" ry="3.4" fill="#1e3018" opacity="0.85"/><ellipse cx="25.2" cy="68.4" rx="2.7" ry="1.9" fill="#1e3018" opacity="0.85"/><ellipse cx="14.3" cy="47.8" rx="5.7" ry="4.3" fill="#3e6a2c" opacity="0.85"/><rect x="51" y="0" width="26" height="72" fill="#5a4236"/><rect x="55" y="0" width="5" height="72" fill="#6e5244"/><rect x="65" y="0" width="3" height="72" fill="#3e2c24"/><rect x="71" y="0" width="6" height="72" fill="#6a4e40"/><path d="M0,70 L77,66 L77,102 L0,102Z" fill="url(#tab)"/><ellipse cx="61.8" cy="97.3" rx="8.6" ry="8.5" fill="#9a7a64" opacity="0.45"/><ellipse cx="72.1" cy="88" rx="9" ry="6.4" fill="#9a7a64" opacity="0.45"/><ellipse cx="0.7" cy="78.8" rx="5.9" ry="5.1" fill="#6a4a3a" opacity="0.45"/><ellipse cx="62.4" cy="84.8" rx="7.8" ry="5.3" fill="#6a4a3a" opacity="0.45"/><ellipse cx="5.1" cy="92.6" rx="7.6" ry="4.8" fill="#9a7a64" opacity="0.45"/><ellipse cx="57.1" cy="80.7" rx="8.5" ry="6.5" fill="#9a7a64" opacity="0.45"/><path d="M30.9,5 L57.1,5 L57.1,13 C63.5,14 64.5,17 64.5,22 L64.5,81 Q64.5,89 55.5,89 L32.5,89 Q23.5,89 23.5,81 L23.5,22 C23.5,17 24.5,14 30.9,13 Z" fill="#e0ecec" fill-opacity="0.2" stroke="#eef4f4" stroke-opacity="0.5" stroke-width="1"/><rect x="30.9" y="7" width="26.2" height="2" fill="#f0f4f4" opacity="0.35"/><rect x="30.9" y="10" width="26.2" height="1.6" fill="#f0f4f4" opacity="0.3"/><rect x="26" y="25" width="36" height="61" rx="6" fill="url(#gal)"/><path d="M26,40.2 L31,31.1 L34.6,40.2 L38.2,44.5 L40.4,55.5 L42.6,61.6 L40.4,71.4 L34.6,75 L26,73.8 L26,40.2 Z" fill="#1a2414" opacity="0.62"/><path d="M48.3,73.8 L57.7,43.3 L62,46.3 L62,73.8 Z" fill="#201838" opacity="0.45"/><ellipse cx="47.6" cy="79.9" rx="7.2" ry="4.3" fill="#d8f4fc" opacity="0.55"/><path d="M26,77.5 Q40.4,73.8 62,81.1 L62,86 L26,86 Z" fill="#2ab0c8" opacity="0.8"/><rect x="27" y="24" width="2" height="49" rx="1" fill="#fff" opacity="0.3"/></svg><svg x="384.2" y="16" width="77.1" height="102" viewBox="0 0 77.1 102" overflow="hidden"><rect width="77" height="102" fill="#3a5a2c"/><rect x="0" y="45" width="54" height="30" fill="#24401e" opacity="0.7"/><ellipse cx="9.6" cy="4.8" rx="3.1" ry="2.1" fill="#7aa84a" opacity="0.85"/><ellipse cx="1.2" cy="18" rx="2.7" ry="1.5" fill="#2e4a22" opacity="0.85"/><ellipse cx="45.4" cy="34.3" rx="2.6" ry="1.5" fill="#5a8a38" opacity="0.85"/><ellipse cx="40.7" cy="4.9" rx="6.5" ry="4.6" fill="#6a9a40" opacity="0.85"/><ellipse cx="27" cy="35.1" rx="6.1" ry="5.5" fill="#5a8a38" opacity="0.85"/><ellipse cx="36.6" cy="42.6" rx="3.8" ry="2.2" fill="#4a7a30" opacity="0.85"/><ellipse cx="28.4" cy="0.5" rx="5.4" ry="4.5" fill="#5a8a38" opacity="0.85"/><ellipse cx="11.5" cy="27.7" rx="6.1" ry="5.6" fill="#7aa84a" opacity="0.85"/><ellipse cx="27.3" cy="25.5" rx="3" ry="2.7" fill="#7aa84a" opacity="0.85"/><ellipse cx="23.6" cy="21" rx="5.8" ry="4.4" fill="#7aa84a" opacity="0.85"/><ellipse cx="32.4" cy="25.8" rx="4.6" ry="2.4" fill="#7aa84a" opacity="0.85"/><ellipse cx="24.1" cy="26.7" rx="4.9" ry="4.7" fill="#6a9a40" opacity="0.85"/><ellipse cx="29" cy="14.8" rx="3.5" ry="2.9" fill="#6a9a40" opacity="0.85"/><ellipse cx="39.8" cy="44.5" rx="4.1" ry="3.8" fill="#6a9a40" opacity="0.85"/><ellipse cx="40.7" cy="40.4" rx="2.9" ry="1.7" fill="#6a9a40" opacity="0.85"/><ellipse cx="44.8" cy="35.9" rx="4.5" ry="4.5" fill="#5a8a38" opacity="0.85"/><ellipse cx="10" cy="1.7" rx="3.9" ry="2.9" fill="#4a7a30" opacity="0.85"/><ellipse cx="24.5" cy="24.1" rx="6" ry="3.6" fill="#4a7a30" opacity="0.85"/><ellipse cx="51.9" cy="10.7" rx="2.9" ry="2.1" fill="#7aa84a" opacity="0.85"/><ellipse cx="47.3" cy="3.2" rx="4.5" ry="2.4" fill="#2e4a22" opacity="0.85"/><ellipse cx="52.5" cy="3" rx="6.3" ry="5.7" fill="#6a9a40" opacity="0.85"/><ellipse cx="5.4" cy="1.7" rx="3.9" ry="3.6" fill="#4a7a30" opacity="0.85"/><ellipse cx="6.3" cy="45.8" rx="3.9" ry="3.6" fill="#1e3018" opacity="0.85"/><ellipse cx="25.1" cy="55.7" rx="2.8" ry="2.3" fill="#1e3018" opacity="0.85"/><ellipse cx="34" cy="68.1" rx="5" ry="3" fill="#1e3018" opacity="0.85"/><ellipse cx="53.7" cy="52.1" rx="5.4" ry="4.6" fill="#1e3018" opacity="0.85"/><ellipse cx="51.1" cy="61.1" rx="3.2" ry="2" fill="#2a4a22" opacity="0.85"/><ellipse cx="9.3" cy="58.6" rx="2.6" ry="1.7" fill="#3e6a2c" opacity="0.85"/><ellipse cx="50.8" cy="59.5" rx="3.8" ry="2.2" fill="#2a4a22" opacity="0.85"/><ellipse cx="37.3" cy="63.6" rx="3.8" ry="2.5" fill="#3e6a2c" opacity="0.85"/><ellipse cx="10.8" cy="42.3" rx="3.4" ry="2.4" fill="#1e3018" opacity="0.85"/><ellipse cx="22.1" cy="54.6" rx="4.3" ry="4.1" fill="#3e6a2c" opacity="0.85"/><ellipse cx="27.7" cy="53.4" rx="4.2" ry="2.4" fill="#2a4a22" opacity="0.85"/><ellipse cx="47.1" cy="49.2" rx="5.5" ry="4.6" fill="#3e6a2c" opacity="0.85"/><rect x="51" y="0" width="26" height="72" fill="#5a4236"/><rect x="55" y="0" width="5" height="72" fill="#6e5244"/><rect x="65" y="0" width="3" height="72" fill="#3e2c24"/><rect x="71" y="0" width="6" height="72" fill="#6a4e40"/><path d="M0,70 L77,66 L77,102 L0,102Z" fill="url(#tab)"/><ellipse cx="17.4" cy="87.9" rx="5.2" ry="3.7" fill="#9a7a64" opacity="0.45"/><ellipse cx="34.5" cy="76.7" rx="6.5" ry="4.2" fill="#6a4a3a" opacity="0.45"/><ellipse cx="50.7" cy="82.2" rx="8" ry="4" fill="#9a7a64" opacity="0.45"/><ellipse cx="1.2" cy="85.1" rx="7.6" ry="7.1" fill="#6a4a3a" opacity="0.45"/><ellipse cx="32.4" cy="84.2" rx="8.9" ry="8.3" fill="#9a7a64" opacity="0.45"/><ellipse cx="42" cy="77.7" rx="9.4" ry="5.1" fill="#6a4a3a" opacity="0.45"/><path d="M30.9,5 L57.1,5 L57.1,13 C63.5,14 64.5,17 64.5,22 L64.5,81 Q64.5,89 55.5,89 L32.5,89 Q23.5,89 23.5,81 L23.5,22 C23.5,17 24.5,14 30.9,13 Z" fill="#e0ecec" fill-opacity="0.2" stroke="#eef4f4" stroke-opacity="0.5" stroke-width="1"/><rect x="30.9" y="7" width="26.2" height="2" fill="#f0f4f4" opacity="0.35"/><rect x="30.9" y="10" width="26.2" height="1.6" fill="#f0f4f4" opacity="0.3"/><rect x="26" y="25" width="36" height="61" rx="6" fill="url(#gal)"/><path d="M26,40.2 L31,31.1 L34.6,40.2 L38.2,44.5 L40.4,55.5 L42.6,61.6 L40.4,71.4 L34.6,75 L26,73.8 L26,40.2 Z" fill="#1a2414" opacity="0.62"/><path d="M48.3,73.8 L57.7,43.3 L62,46.3 L62,73.8 Z" fill="#201838" opacity="0.45"/><ellipse cx="47.6" cy="79.9" rx="7.2" ry="4.3" fill="#d8f4fc" opacity="0.55"/><path d="M26,77.5 Q40.4,73.8 62,81.1 L62,86 L26,86 Z" fill="#2ab0c8" opacity="0.8"/><rect x="27" y="24" width="2" height="49" rx="1" fill="#fff" opacity="0.3"/></svg><svg x="461" y="16" width="77.1" height="102" viewBox="0 0 77.1 102" overflow="hidden"><rect width="77" height="102" fill="#5e4c44"/><rect x="44" y="0" width="4" height="68" fill="#4a3a34"/><rect x="64" y="0" width="3" height="68" fill="#6e5c54"/><ellipse cx="0.5" cy="1.3" rx="6" ry="5.1" fill="#3a6a30" opacity="0.9"/><ellipse cx="22.7" cy="6.9" rx="3.4" ry="2" fill="#2a4a24" opacity="0.9"/><ellipse cx="16.3" cy="28.7" rx="3.3" ry="2" fill="#3a6a30" opacity="0.9"/><ellipse cx="33.7" cy="17.4" rx="7.1" ry="5.9" fill="#3a6a30" opacity="0.9"/><ellipse cx="33.9" cy="2.9" rx="5.3" ry="3.7" fill="#5a8a40" opacity="0.9"/><ellipse cx="17.6" cy="25.7" rx="5.5" ry="5" fill="#8a6a5a" opacity="0.9"/><ellipse cx="3.3" cy="35" rx="3" ry="3" fill="#2a4a24" opacity="0.9"/><ellipse cx="22.6" cy="42.7" rx="5.4" ry="5.1" fill="#8a6a5a" opacity="0.9"/><ellipse cx="15.9" cy="0.7" rx="7.3" ry="7.1" fill="#3a6a30" opacity="0.9"/><ellipse cx="3.7" cy="18.2" rx="5.8" ry="5.7" fill="#3a6a30" opacity="0.9"/><ellipse cx="10.3" cy="22.3" rx="3.6" ry="2.8" fill="#5a8a40" opacity="0.9"/><ellipse cx="22.5" cy="22.4" rx="4.5" ry="3.1" fill="#5a8a40" opacity="0.9"/><ellipse cx="8.4" cy="18.2" rx="3.3" ry="2" fill="#8a6a5a" opacity="0.9"/><ellipse cx="5.8" cy="4.6" rx="3.7" ry="3.5" fill="#5a8a40" opacity="0.9"/><ellipse cx="4.9" cy="24.8" rx="3.9" ry="3.1" fill="#3a6a30" opacity="0.9"/><ellipse cx="14.1" cy="0.5" rx="3.8" ry="3.4" fill="#8a6a5a" opacity="0.9"/><rect x="0" y="42" width="34" height="6" fill="#8a8070"/><rect x="0" y="66" width="77" height="36" fill="#a08a78"/><ellipse cx="12.1" cy="87" rx="5.2" ry="2.9" fill="#8a7462" opacity="0.55"/><ellipse cx="70.2" cy="87.4" rx="10.3" ry="9.2" fill="#8a7462" opacity="0.55"/><ellipse cx="32" cy="72.5" rx="6.8" ry="3.8" fill="#8a7462" opacity="0.55"/><ellipse cx="25.3" cy="85.6" rx="9.6" ry="9" fill="#b09a88" opacity="0.55"/><ellipse cx="43.7" cy="86" rx="11.3" ry="7.9" fill="#8a7462" opacity="0.55"/><ellipse cx="20.6" cy="89.2" rx="6.5" ry="3.5" fill="#8a7462" opacity="0.55"/><ellipse cx="29.6" cy="90.8" rx="7.3" ry="4.1" fill="#8a7462" opacity="0.55"/><ellipse cx="64.3" cy="72" rx="8.7" ry="6.7" fill="#8a7462" opacity="0.55"/><path d="M5,47 L17,47 L14,57 L15,74 L7,74 L8,57Z" fill="#c8d0d0" opacity="0.4"/><rect x="6" y="63" width="10" height="11" fill="#48b8c0" opacity="0.85"/><rect x="58" y="42" width="15" height="30" rx="2" fill="#b09060" opacity="0.6"/><rect x="58" y="59" width="15" height="13" fill="#4a40b0" opacity="0.85"/><path d="M22.6,4 L45.4,4 L45.4,12 C50.8,13 51.8,16 51.8,21 L51.8,78 Q51.8,86 42.8,86 L25.2,86 Q16.2,86 16.2,78 L16.2,21 C16.2,16 17.2,13 22.6,12 Z" fill="#e0ecec" fill-opacity="0.2" stroke="#eef4f4" stroke-opacity="0.5" stroke-width="1"/><rect x="22.6" y="6" width="22.7" height="2" fill="#f0f4f4" opacity="0.35"/><rect x="22.6" y="9" width="22.7" height="1.6" fill="#f0f4f4" opacity="0.3"/><rect x="23.6" y="1" width="20.7" height="6" rx="2" fill="#a87c58"/><rect x="18.8" y="26" width="30.5" height="57" rx="6" fill="url(#gal)"/><path d="M18.8,40.2 L23,31.7 L26.1,40.2 L29.1,44.2 L31,54.5 L32.8,60.2 L31,69.3 L26.1,72.7 L18.8,71.6 L18.8,40.2 Z" fill="#1a2414" opacity="0.62"/><path d="M37.7,71.6 L45.6,43.1 L49.2,46 L49.2,71.6 Z" fill="#201838" opacity="0.45"/><ellipse cx="37" cy="77.3" rx="6.1" ry="4" fill="#d8f4fc" opacity="0.55"/><path d="M18.8,75 Q31,71.6 49.2,78.4 L49.2,83 L18.8,83 Z" fill="#2ab0c8" opacity="0.8"/><rect x="19.8" y="23" width="2" height="47" rx="1" fill="#fff" opacity="0.3"/></svg><svg x="537.8" y="16" width="77.1" height="102" viewBox="0 0 77.1 102" overflow="hidden"><rect width="77" height="102" fill="#5e4c44"/><rect x="44" y="0" width="4" height="68" fill="#4a3a34"/><rect x="64" y="0" width="3" height="68" fill="#6e5c54"/><ellipse cx="27.8" cy="29.7" rx="6.6" ry="3.4" fill="#2a4a24" opacity="0.9"/><ellipse cx="16.5" cy="10.1" rx="6.7" ry="5" fill="#3a6a30" opacity="0.9"/><ellipse cx="12.7" cy="26.1" rx="3.5" ry="3" fill="#2a4a24" opacity="0.9"/><ellipse cx="32.7" cy="16.1" rx="6" ry="4.1" fill="#2a4a24" opacity="0.9"/><ellipse cx="7.1" cy="33.6" rx="3.3" ry="1.9" fill="#3a6a30" opacity="0.9"/><ellipse cx="17.6" cy="33.2" rx="3.3" ry="1.8" fill="#2a4a24" opacity="0.9"/><ellipse cx="20" cy="35.5" rx="7.7" ry="6.4" fill="#2a4a24" opacity="0.9"/><ellipse cx="13.7" cy="12.6" rx="6.4" ry="3.5" fill="#5a8a40" opacity="0.9"/><ellipse cx="28.3" cy="14.4" rx="4.6" ry="4.2" fill="#2a4a24" opacity="0.9"/><ellipse cx="21.8" cy="2.5" rx="6.8" ry="3.6" fill="#3a6a30" opacity="0.9"/><ellipse cx="18.8" cy="40.8" rx="6.2" ry="3.2" fill="#5a8a40" opacity="0.9"/><ellipse cx="19.7" cy="0.2" rx="6.7" ry="4.7" fill="#3a6a30" opacity="0.9"/><ellipse cx="5.9" cy="3.7" rx="6.4" ry="3.7" fill="#8a6a5a" opacity="0.9"/><ellipse cx="23" cy="35.3" rx="5.2" ry="5" fill="#3a6a30" opacity="0.9"/><ellipse cx="28.4" cy="42.1" rx="4.8" ry="4.4" fill="#3a6a30" opacity="0.9"/><ellipse cx="23.9" cy="17.5" rx="6.5" ry="5.3" fill="#3a6a30" opacity="0.9"/><rect x="0" y="42" width="34" height="6" fill="#8a8070"/><rect x="0" y="66" width="77" height="36" fill="#a08a78"/><ellipse cx="71" cy="76.8" rx="7.9" ry="6.1" fill="#b09a88" opacity="0.55"/><ellipse cx="11.9" cy="78.8" rx="7.9" ry="7.4" fill="#8a7462" opacity="0.55"/><ellipse cx="15.4" cy="92.5" rx="8.5" ry="6.1" fill="#8a7462" opacity="0.55"/><ellipse cx="39.4" cy="85.4" rx="8.8" ry="8.2" fill="#8a7462" opacity="0.55"/><ellipse cx="15.6" cy="81.1" rx="6.1" ry="4.1" fill="#8a7462" opacity="0.55"/><ellipse cx="34.9" cy="88.8" rx="8.2" ry="7.3" fill="#b09a88" opacity="0.55"/><ellipse cx="37" cy="101.4" rx="7.3" ry="6.2" fill="#b09a88" opacity="0.55"/><ellipse cx="48.7" cy="81.2" rx="7.9" ry="4.1" fill="#b09a88" opacity="0.55"/><path d="M5,47 L17,47 L14,57 L15,74 L7,74 L8,57Z" fill="#c8d0d0" opacity="0.4"/><rect x="6" y="63" width="10" height="11" fill="#48b8c0" opacity="0.85"/><rect x="58" y="42" width="15" height="30" rx="2" fill="#b09060" opacity="0.6"/><rect x="58" y="59" width="15" height="13" fill="#4a40b0" opacity="0.85"/><path d="M22.1,4 L45.1,4 L45.1,12 C50.6,13 51.6,16 51.6,21 L51.6,78 Q51.6,86 42.6,86 L24.6,86 Q15.6,86 15.6,78 L15.6,21 C15.6,16 16.6,13 22.1,12 Z" fill="#e0ecec" fill-opacity="0.2" stroke="#eef4f4" stroke-opacity="0.5" stroke-width="1"/><rect x="22.1" y="6" width="23" height="2" fill="#f0f4f4" opacity="0.35"/><rect x="22.1" y="9" width="23" height="1.6" fill="#f0f4f4" opacity="0.3"/><rect x="23.1" y="1" width="21" height="6" rx="2" fill="#a87c58"/><rect x="18.1" y="26" width="31" height="57" rx="6" fill="url(#gal)"/><path d="M18.1,40.2 L22.4,31.7 L25.5,40.2 L28.6,44.2 L30.5,54.5 L32.4,60.2 L30.5,69.3 L25.5,72.7 L18.1,71.6 L18.1,40.2 Z" fill="#1a2414" opacity="0.62"/><path d="M37.3,71.6 L45.4,43.1 L49.1,46 L49.1,71.6 Z" fill="#201838" opacity="0.45"/><ellipse cx="36.7" cy="77.3" rx="6.2" ry="4" fill="#d8f4fc" opacity="0.55"/><path d="M18.1,75 Q30.5,71.6 49.1,78.4 L49.1,83 L18.1,83 Z" fill="#2ab0c8" opacity="0.8"/><rect x="19.1" y="23" width="2" height="47" rx="1" fill="#fff" opacity="0.3"/></svg><svg x="614.7" y="16" width="77.1" height="102" viewBox="0 0 77.1 102" overflow="hidden"><rect width="77" height="102" fill="#3a5a2c"/><rect x="0" y="45" width="54" height="30" fill="#24401e" opacity="0.7"/><ellipse cx="43.3" cy="11.5" rx="3.5" ry="2.1" fill="#2e4a22" opacity="0.85"/><ellipse cx="3.5" cy="8.1" rx="4.2" ry="3.2" fill="#7aa84a" opacity="0.85"/><ellipse cx="26.3" cy="10.4" rx="5.5" ry="3" fill="#4a7a30" opacity="0.85"/><ellipse cx="27" cy="6.8" rx="6.5" ry="4.4" fill="#6a9a40" opacity="0.85"/><ellipse cx="29.8" cy="15" rx="3.1" ry="3" fill="#4a7a30" opacity="0.85"/><ellipse cx="43.5" cy="4.4" rx="5.6" ry="3.4" fill="#6a9a40" opacity="0.85"/><ellipse cx="46.5" cy="33.2" rx="3.9" ry="2.3" fill="#6a9a40" opacity="0.85"/><ellipse cx="31.5" cy="40.5" rx="6.2" ry="5.2" fill="#4a7a30" opacity="0.85"/><ellipse cx="5.9" cy="35.4" rx="5.7" ry="4.6" fill="#4a7a30" opacity="0.85"/><ellipse cx="6" cy="16.1" rx="3.2" ry="3" fill="#4a7a30" opacity="0.85"/><ellipse cx="15.5" cy="25.2" rx="3.6" ry="1.9" fill="#5a8a38" opacity="0.85"/><ellipse cx="15.4" cy="12.5" rx="4.5" ry="4.3" fill="#6a9a40" opacity="0.85"/><ellipse cx="44.4" cy="24.5" rx="3" ry="1.6" fill="#6a9a40" opacity="0.85"/><ellipse cx="28.9" cy="29.7" rx="6.2" ry="5.5" fill="#4a7a30" opacity="0.85"/><ellipse cx="16.5" cy="19.2" rx="5.6" ry="4.6" fill="#2e4a22" opacity="0.85"/><ellipse cx="12.6" cy="20.4" rx="4" ry="3.4" fill="#2e4a22" opacity="0.85"/><ellipse cx="14.6" cy="32.7" rx="6" ry="3.2" fill="#2e4a22" opacity="0.85"/><ellipse cx="6" cy="42.3" rx="5.1" ry="2.7" fill="#5a8a38" opacity="0.85"/><ellipse cx="5.5" cy="25.4" rx="3" ry="3" fill="#4a7a30" opacity="0.85"/><ellipse cx="19.1" cy="6.3" rx="6.3" ry="5.2" fill="#6a9a40" opacity="0.85"/><ellipse cx="1.6" cy="25.7" rx="6.4" ry="5.4" fill="#2e4a22" opacity="0.85"/><ellipse cx="29.3" cy="19.7" rx="5.2" ry="2.8" fill="#4a7a30" opacity="0.85"/><ellipse cx="33.1" cy="69.6" rx="5.6" ry="3.1" fill="#2a4a22" opacity="0.85"/><ellipse cx="26.2" cy="42.5" rx="4.2" ry="3.3" fill="#1e3018" opacity="0.85"/><ellipse cx="4.8" cy="68.8" rx="3.4" ry="2.1" fill="#3e6a2c" opacity="0.85"/><ellipse cx="50.7" cy="71.2" rx="5.8" ry="5.6" fill="#3e6a2c" opacity="0.85"/><ellipse cx="50.5" cy="40.6" rx="4.2" ry="3.4" fill="#1e3018" opacity="0.85"/><ellipse cx="30.9" cy="68.7" rx="3.6" ry="2.1" fill="#1e3018" opacity="0.85"/><ellipse cx="8.5" cy="69.2" rx="2.9" ry="1.9" fill="#3e6a2c" opacity="0.85"/><ellipse cx="51.7" cy="40.8" rx="2.6" ry="2.4" fill="#1e3018" opacity="0.85"/><ellipse cx="32.7" cy="67.1" rx="5.2" ry="4.3" fill="#2a4a22" opacity="0.85"/><ellipse cx="0" cy="42.2" rx="5.3" ry="5.2" fill="#2a4a22" opacity="0.85"/><ellipse cx="22" cy="50.7" rx="3.7" ry="1.9" fill="#2a4a22" opacity="0.85"/><ellipse cx="14.2" cy="58.7" rx="4.3" ry="2.9" fill="#1e3018" opacity="0.85"/><rect x="51" y="0" width="26" height="72" fill="#5a4236"/><rect x="55" y="0" width="5" height="72" fill="#6e5244"/><rect x="65" y="0" width="3" height="72" fill="#3e2c24"/><rect x="71" y="0" width="6" height="72" fill="#6a4e40"/><rect x="20" y="0" width="15" height="10" fill="#6a5040"/><rect x="56" y="44" width="21" height="28" rx="5" fill="#8a7262"/><rect x="0" y="44" width="22" height="8" fill="#6a5a48" opacity="0.8"/><rect x="4" y="52" width="16" height="24" rx="5" fill="#a8d0d0" opacity="0.4"/><path d="M0,70 L77,66 L77,102 L0,102Z" fill="url(#tab)"/><ellipse cx="27.1" cy="92.6" rx="9.6" ry="6.8" fill="#9a7a64" opacity="0.45"/><ellipse cx="11.5" cy="81.8" rx="6.9" ry="6.1" fill="#6a4a3a" opacity="0.45"/><ellipse cx="14.2" cy="93.3" rx="7.7" ry="6.1" fill="#6a4a3a" opacity="0.45"/><ellipse cx="44.2" cy="75.6" rx="5.9" ry="3.1" fill="#6a4a3a" opacity="0.45"/><ellipse cx="56.9" cy="80.5" rx="4.2" ry="2.6" fill="#9a7a64" opacity="0.45"/><ellipse cx="6.1" cy="95.6" rx="5.5" ry="3.3" fill="#6a4a3a" opacity="0.45"/><path d="M30.3,5 L53.7,5 L53.7,13 C59.4,14 60.4,17 60.4,22 L60.4,78 Q60.4,86 51.4,86 L32.6,86 Q23.6,86 23.6,78 L23.6,22 C23.6,17 24.6,14 30.3,13 Z" fill="#e0ecec" fill-opacity="0.2" stroke="#eef4f4" stroke-opacity="0.5" stroke-width="1"/><rect x="30.3" y="7" width="23.5" height="2" fill="#f0f4f4" opacity="0.35"/><rect x="30.3" y="10" width="23.5" height="1.6" fill="#f0f4f4" opacity="0.3"/><rect x="31.3" y="2" width="21.5" height="6" rx="2" fill="#a87c58"/><rect x="26.1" y="26" width="31.7" height="57" rx="6" fill="url(#gal)"/><path d="M26.1,40.2 L30.6,31.7 L33.8,40.2 L36.9,44.2 L38.8,54.5 L40.7,60.2 L38.8,69.3 L33.8,72.7 L26.1,71.6 L26.1,40.2 Z" fill="#1a2414" opacity="0.62"/><path d="M45.8,71.6 L54,43.1 L57.9,46 L57.9,71.6 Z" fill="#201838" opacity="0.45"/><ellipse cx="45.2" cy="77.3" rx="6.3" ry="4" fill="#d8f4fc" opacity="0.55"/><path d="M26.1,75 Q38.8,71.6 57.9,78.4 L57.9,83 L26.1,83 Z" fill="#2ab0c8" opacity="0.8"/><rect x="27.1" y="24" width="2" height="46" rx="1" fill="#fff" opacity="0.3"/></svg><svg x="691.5" y="16" width="77.1" height="102" viewBox="0 0 77.1 102" overflow="hidden"><rect width="77" height="102" fill="#3a5a2c"/><rect x="0" y="45" width="54" height="30" fill="#24401e" opacity="0.7"/><ellipse cx="30.1" cy="6.2" rx="5.2" ry="2.8" fill="#5a8a38" opacity="0.85"/><ellipse cx="53.5" cy="17.4" rx="3" ry="2.7" fill="#6a9a40" opacity="0.85"/><ellipse cx="18.3" cy="35.6" rx="4" ry="2.6" fill="#2e4a22" opacity="0.85"/><ellipse cx="51" cy="3.1" rx="6.4" ry="6.1" fill="#5a8a38" opacity="0.85"/><ellipse cx="26.9" cy="17.1" rx="2.8" ry="2.6" fill="#6a9a40" opacity="0.85"/><ellipse cx="3.7" cy="7.2" rx="4.5" ry="2.7" fill="#4a7a30" opacity="0.85"/><ellipse cx="18.5" cy="41.9" rx="3.1" ry="2.6" fill="#5a8a38" opacity="0.85"/><ellipse cx="10.4" cy="6.1" rx="5.2" ry="4.9" fill="#7aa84a" opacity="0.85"/><ellipse cx="19.8" cy="32.7" rx="6.2" ry="3.6" fill="#5a8a38" opacity="0.85"/><ellipse cx="53.1" cy="32.6" rx="5.2" ry="2.9" fill="#4a7a30" opacity="0.85"/><ellipse cx="9.9" cy="5.5" rx="4.6" ry="3.5" fill="#2e4a22" opacity="0.85"/><ellipse cx="23.9" cy="36.2" rx="3.5" ry="1.9" fill="#6a9a40" opacity="0.85"/><ellipse cx="0.9" cy="41.5" rx="6.4" ry="6.2" fill="#2e4a22" opacity="0.85"/><ellipse cx="10" cy="43.4" rx="5.1" ry="2.8" fill="#7aa84a" opacity="0.85"/><ellipse cx="42.8" cy="43.8" rx="4.3" ry="3.5" fill="#7aa84a" opacity="0.85"/><ellipse cx="25.1" cy="8.6" rx="6.3" ry="6.2" fill="#5a8a38" opacity="0.85"/><ellipse cx="23.7" cy="26.3" rx="4.7" ry="3" fill="#5a8a38" opacity="0.85"/><ellipse cx="9.3" cy="33.1" rx="3.3" ry="1.7" fill="#6a9a40" opacity="0.85"/><ellipse cx="22.9" cy="43.3" rx="4.9" ry="2.6" fill="#5a8a38" opacity="0.85"/><ellipse cx="9.9" cy="0.7" rx="3.7" ry="1.9" fill="#4a7a30" opacity="0.85"/><ellipse cx="45.8" cy="25.3" rx="5.3" ry="3.3" fill="#4a7a30" opacity="0.85"/><ellipse cx="9" cy="6.5" rx="4.8" ry="3.9" fill="#7aa84a" opacity="0.85"/><ellipse cx="29.2" cy="54.7" rx="3.7" ry="3.5" fill="#2a4a22" opacity="0.85"/><ellipse cx="36.6" cy="59.9" rx="5.6" ry="4.7" fill="#3e6a2c" opacity="0.85"/><ellipse cx="27.5" cy="71.5" rx="3.5" ry="2.1" fill="#1e3018" opacity="0.85"/><ellipse cx="16.9" cy="57.8" rx="3.9" ry="3.3" fill="#3e6a2c" opacity="0.85"/><ellipse cx="15.3" cy="43.1" rx="4.9" ry="3.3" fill="#1e3018" opacity="0.85"/><ellipse cx="6.1" cy="63.8" rx="5.3" ry="4.4" fill="#1e3018" opacity="0.85"/><ellipse cx="0.1" cy="55.9" rx="3.4" ry="2.7" fill="#1e3018" opacity="0.85"/><ellipse cx="30.7" cy="41.8" rx="3.6" ry="3" fill="#2a4a22" opacity="0.85"/><ellipse cx="34.6" cy="71" rx="3.5" ry="2.5" fill="#2a4a22" opacity="0.85"/><ellipse cx="15.1" cy="41.6" rx="4.5" ry="3.2" fill="#2a4a22" opacity="0.85"/><ellipse cx="13.8" cy="68.9" rx="4.3" ry="3" fill="#1e3018" opacity="0.85"/><ellipse cx="3.1" cy="42.3" rx="5.5" ry="3.2" fill="#3e6a2c" opacity="0.85"/><rect x="51" y="0" width="26" height="72" fill="#5a4236"/><rect x="55" y="0" width="5" height="72" fill="#6e5244"/><rect x="65" y="0" width="3" height="72" fill="#3e2c24"/><rect x="71" y="0" width="6" height="72" fill="#6a4e40"/><path d="M0,70 L77,66 L77,102 L0,102Z" fill="url(#tab)"/><ellipse cx="64.8" cy="88.6" rx="6.1" ry="3.6" fill="#9a7a64" opacity="0.45"/><ellipse cx="53.1" cy="87" rx="5.8" ry="4.8" fill="#9a7a64" opacity="0.45"/><ellipse cx="52.8" cy="96.5" rx="8.3" ry="7.5" fill="#9a7a64" opacity="0.45"/><ellipse cx="9.1" cy="87.8" rx="8.3" ry="4.3" fill="#9a7a64" opacity="0.45"/><ellipse cx="73.6" cy="92.8" rx="6.8" ry="5.6" fill="#6a4a3a" opacity="0.45"/><ellipse cx="71.8" cy="92.4" rx="4.4" ry="3.7" fill="#9a7a64" opacity="0.45"/><path d="M30.2,5 L55.2,5 L55.2,13 C61.2,14 62.2,17 62.2,22 L62.2,81 Q62.2,89 53.2,89 L32.2,89 Q23.2,89 23.2,81 L23.2,22 C23.2,17 24.2,14 30.2,13 Z" fill="#e0ecec" fill-opacity="0.2" stroke="#eef4f4" stroke-opacity="0.5" stroke-width="1"/><rect x="30.2" y="7" width="25" height="2" fill="#f0f4f4" opacity="0.35"/><rect x="30.2" y="10" width="25" height="1.6" fill="#f0f4f4" opacity="0.3"/><rect x="25.7" y="26" width="34" height="60" rx="6" fill="url(#gal)"/><path d="M25.7,41 L30.5,32 L33.9,41 L37.3,45.2 L39.3,56 L41.3,62 L39.3,71.6 L33.9,75.2 L25.7,74 L25.7,41 Z" fill="#1a2414" opacity="0.62"/><path d="M46.8,74 L55.6,44 L59.7,47 L59.7,74 Z" fill="#201838" opacity="0.45"/><ellipse cx="46.1" cy="80" rx="6.8" ry="4.2" fill="#d8f4fc" opacity="0.55"/><path d="M25.7,77.6 Q39.3,74 59.7,81.2 L59.7,86 L25.7,86 Z" fill="#2ab0c8" opacity="0.8"/><rect x="26.7" y="24" width="2" height="49" rx="1" fill="#fff" opacity="0.3"/></svg><svg x="768.3" y="16" width="77.1" height="102" viewBox="0 0 77.1 102" overflow="hidden"><rect width="77" height="102" fill="#3a5a2c"/><rect x="0" y="45" width="54" height="30" fill="#24401e" opacity="0.7"/><ellipse cx="14" cy="13" rx="4.1" ry="2.5" fill="#2e4a22" opacity="0.85"/><ellipse cx="37.5" cy="34.1" rx="6.4" ry="5.2" fill="#6a9a40" opacity="0.85"/><ellipse cx="40.5" cy="30.1" rx="4.2" ry="3" fill="#7aa84a" opacity="0.85"/><ellipse cx="42.4" cy="39.3" rx="4.8" ry="4.6" fill="#7aa84a" opacity="0.85"/><ellipse cx="12.1" cy="32" rx="2.7" ry="2.5" fill="#7aa84a" opacity="0.85"/><ellipse cx="43" cy="10.3" rx="5.1" ry="4.5" fill="#6a9a40" opacity="0.85"/><ellipse cx="27.9" cy="14.2" rx="3.6" ry="2.1" fill="#4a7a30" opacity="0.85"/><ellipse cx="37.1" cy="42.4" rx="3.8" ry="3.7" fill="#5a8a38" opacity="0.85"/><ellipse cx="15.7" cy="42.8" rx="5" ry="4.9" fill="#5a8a38" opacity="0.85"/><ellipse cx="18" cy="12.6" rx="4.6" ry="3.4" fill="#5a8a38" opacity="0.85"/><ellipse cx="5.2" cy="31.7" rx="2.7" ry="2.4" fill="#2e4a22" opacity="0.85"/><ellipse cx="13.5" cy="9" rx="4.8" ry="3" fill="#4a7a30" opacity="0.85"/><ellipse cx="21.5" cy="15.3" rx="6.3" ry="4.1" fill="#2e4a22" opacity="0.85"/><ellipse cx="22.4" cy="18.3" rx="3.4" ry="2.5" fill="#5a8a38" opacity="0.85"/><ellipse cx="6.6" cy="19.5" rx="5.2" ry="4.6" fill="#2e4a22" opacity="0.85"/><ellipse cx="43.7" cy="41.6" rx="4.5" ry="4.4" fill="#2e4a22" opacity="0.85"/><ellipse cx="29.2" cy="44.9" rx="4.6" ry="2.7" fill="#5a8a38" opacity="0.85"/><ellipse cx="33.2" cy="8.3" rx="6.4" ry="5.7" fill="#2e4a22" opacity="0.85"/><ellipse cx="39.2" cy="14.4" rx="5.6" ry="4.6" fill="#5a8a38" opacity="0.85"/><ellipse cx="24.7" cy="19.5" rx="2.9" ry="2.2" fill="#4a7a30" opacity="0.85"/><ellipse cx="48" cy="2.5" rx="2.8" ry="1.8" fill="#2e4a22" opacity="0.85"/><ellipse cx="23.6" cy="5.8" rx="4.2" ry="3.3" fill="#6a9a40" opacity="0.85"/><ellipse cx="21.8" cy="60.8" rx="4.9" ry="3.9" fill="#2a4a22" opacity="0.85"/><ellipse cx="4.7" cy="58" rx="3.4" ry="2.6" fill="#3e6a2c" opacity="0.85"/><ellipse cx="0.9" cy="42.3" rx="3.9" ry="2.8" fill="#2a4a22" opacity="0.85"/><ellipse cx="11.2" cy="47.8" rx="5.1" ry="5.1" fill="#3e6a2c" opacity="0.85"/><ellipse cx="50" cy="60.4" rx="3.7" ry="1.9" fill="#1e3018" opacity="0.85"/><ellipse cx="27.5" cy="53.1" rx="3.9" ry="3.7" fill="#3e6a2c" opacity="0.85"/><ellipse cx="1.8" cy="43" rx="3.4" ry="2.1" fill="#1e3018" opacity="0.85"/><ellipse cx="23.6" cy="54.5" rx="3.6" ry="2.9" fill="#3e6a2c" opacity="0.85"/><ellipse cx="47.1" cy="59.9" rx="2.8" ry="2.4" fill="#1e3018" opacity="0.85"/><ellipse cx="47.5" cy="54.5" rx="3.8" ry="3.6" fill="#3e6a2c" opacity="0.85"/><ellipse cx="47.8" cy="42.4" rx="3.3" ry="2" fill="#1e3018" opacity="0.85"/><ellipse cx="51.3" cy="61" rx="4.8" ry="3.5" fill="#1e3018" opacity="0.85"/><rect x="51" y="0" width="26" height="72" fill="#5a4236"/><rect x="55" y="0" width="5" height="72" fill="#6e5244"/><rect x="65" y="0" width="3" height="72" fill="#3e2c24"/><rect x="71" y="0" width="6" height="72" fill="#6a4e40"/><path d="M0,70 L77,66 L77,102 L0,102Z" fill="url(#tab)"/><ellipse cx="23" cy="91.2" rx="4.5" ry="3.6" fill="#6a4a3a" opacity="0.45"/><ellipse cx="43.4" cy="85.6" rx="9" ry="6.1" fill="#6a4a3a" opacity="0.45"/><ellipse cx="20" cy="91.6" rx="5.3" ry="3.7" fill="#9a7a64" opacity="0.45"/><ellipse cx="57.6" cy="86.7" rx="7" ry="3.7" fill="#9a7a64" opacity="0.45"/><ellipse cx="64.5" cy="85.6" rx="7.5" ry="6.5" fill="#6a4a3a" opacity="0.45"/><ellipse cx="57.5" cy="90.6" rx="5.5" ry="4.7" fill="#6a4a3a" opacity="0.45"/><path d="M30.5,5 L55.5,5 L55.5,13 C61.5,14 62.5,17 62.5,22 L62.5,81 Q62.5,89 53.5,89 L32.5,89 Q23.5,89 23.5,81 L23.5,22 C23.5,17 24.5,14 30.5,13 Z" fill="#e0ecec" fill-opacity="0.2" stroke="#eef4f4" stroke-opacity="0.5" stroke-width="1"/><rect x="30.5" y="7" width="25" height="2" fill="#f0f4f4" opacity="0.35"/><rect x="30.5" y="10" width="25" height="1.6" fill="#f0f4f4" opacity="0.3"/><rect x="26" y="26" width="34" height="60" rx="6" fill="url(#gal)"/><path d="M26,41 L30.8,32 L34.2,41 L37.6,45.2 L39.6,56 L41.6,62 L39.6,71.6 L34.2,75.2 L26,74 L26,41 Z" fill="#1a2414" opacity="0.62"/><path d="M47.1,74 L55.9,44 L60,47 L60,74 Z" fill="#201838" opacity="0.45"/><ellipse cx="46.4" cy="80" rx="6.8" ry="4.2" fill="#d8f4fc" opacity="0.55"/><path d="M26,77.6 Q39.6,74 60,81.2 L60,86 L26,86 Z" fill="#2ab0c8" opacity="0.8"/><rect x="27" y="24" width="2" height="49" rx="1" fill="#fff" opacity="0.3"/></svg><svg x="845.2" y="16" width="77.1" height="102" viewBox="0 0 77.1 102" overflow="hidden"><rect width="77" height="102" fill="#3a5a2c"/><rect x="0" y="45" width="54" height="30" fill="#24401e" opacity="0.7"/><ellipse cx="29.4" cy="44.4" rx="3" ry="2.7" fill="#4a7a30" opacity="0.85"/><ellipse cx="43.7" cy="22.9" rx="2.6" ry="2.3" fill="#4a7a30" opacity="0.85"/><ellipse cx="28.5" cy="22.3" rx="3.2" ry="2.6" fill="#7aa84a" opacity="0.85"/><ellipse cx="35.8" cy="13" rx="5.7" ry="4.1" fill="#6a9a40" opacity="0.85"/><ellipse cx="5.3" cy="2.2" rx="4.4" ry="3.4" fill="#7aa84a" opacity="0.85"/><ellipse cx="30.8" cy="42.9" rx="3.9" ry="3.4" fill="#5a8a38" opacity="0.85"/><ellipse cx="0.5" cy="24.6" rx="3.2" ry="2.2" fill="#6a9a40" opacity="0.85"/><ellipse cx="20.5" cy="12.3" rx="3.9" ry="3" fill="#5a8a38" opacity="0.85"/><ellipse cx="29.1" cy="17.9" rx="4.1" ry="3.7" fill="#2e4a22" opacity="0.85"/><ellipse cx="13.5" cy="8" rx="3" ry="1.6" fill="#5a8a38" opacity="0.85"/><ellipse cx="39.9" cy="11.9" rx="4.5" ry="3.8" fill="#5a8a38" opacity="0.85"/><ellipse cx="35.9" cy="13.1" rx="3.8" ry="3.1" fill="#4a7a30" opacity="0.85"/><ellipse cx="37.8" cy="15.2" rx="6" ry="3.7" fill="#7aa84a" opacity="0.85"/><ellipse cx="37.9" cy="1.2" rx="6.2" ry="5.5" fill="#4a7a30" opacity="0.85"/><ellipse cx="32.9" cy="44.4" rx="3.4" ry="2.1" fill="#2e4a22" opacity="0.85"/><ellipse cx="17.3" cy="29.1" rx="6.2" ry="5.5" fill="#7aa84a" opacity="0.85"/><ellipse cx="9.5" cy="8.2" rx="4.9" ry="4.3" fill="#7aa84a" opacity="0.85"/><ellipse cx="19.2" cy="31.8" rx="3.4" ry="3.2" fill="#6a9a40" opacity="0.85"/><ellipse cx="25.9" cy="2.7" rx="4.5" ry="3.7" fill="#5a8a38" opacity="0.85"/><ellipse cx="41.4" cy="30.6" rx="6.3" ry="3.2" fill="#4a7a30" opacity="0.85"/><ellipse cx="2.4" cy="15.9" rx="6.4" ry="5.2" fill="#7aa84a" opacity="0.85"/><ellipse cx="3.4" cy="4.6" rx="2.6" ry="2.2" fill="#6a9a40" opacity="0.85"/><ellipse cx="29.9" cy="41.4" rx="3" ry="2.5" fill="#2a4a22" opacity="0.85"/><ellipse cx="25.2" cy="49.2" rx="4.5" ry="3" fill="#3e6a2c" opacity="0.85"/><ellipse cx="0.2" cy="69.6" rx="3.5" ry="1.8" fill="#3e6a2c" opacity="0.85"/><ellipse cx="16.8" cy="58.9" rx="3.4" ry="1.9" fill="#2a4a22" opacity="0.85"/><ellipse cx="25.3" cy="56.4" rx="3.6" ry="3.4" fill="#1e3018" opacity="0.85"/><ellipse cx="43.2" cy="54.2" rx="5" ry="3.1" fill="#3e6a2c" opacity="0.85"/><ellipse cx="19.6" cy="48.5" rx="4.1" ry="3.2" fill="#2a4a22" opacity="0.85"/><ellipse cx="15.4" cy="49.5" rx="3.9" ry="3.2" fill="#2a4a22" opacity="0.85"/><ellipse cx="33.5" cy="49.1" rx="3.2" ry="3" fill="#1e3018" opacity="0.85"/><ellipse cx="36.9" cy="62.1" rx="5.1" ry="3.7" fill="#3e6a2c" opacity="0.85"/><ellipse cx="27.1" cy="47.3" rx="4.5" ry="3.7" fill="#2a4a22" opacity="0.85"/><ellipse cx="4" cy="47.9" rx="5.9" ry="4.6" fill="#1e3018" opacity="0.85"/><rect x="51" y="0" width="26" height="72" fill="#5a4236"/><rect x="55" y="0" width="5" height="72" fill="#6e5244"/><rect x="65" y="0" width="3" height="72" fill="#3e2c24"/><rect x="71" y="0" width="6" height="72" fill="#6a4e40"/><path d="M0,70 L77,66 L77,102 L0,102Z" fill="url(#tab)"/><ellipse cx="42.8" cy="76.1" rx="5.7" ry="3.9" fill="#9a7a64" opacity="0.45"/><ellipse cx="41" cy="78" rx="9.2" ry="8.3" fill="#9a7a64" opacity="0.45"/><ellipse cx="34.5" cy="101.7" rx="9.4" ry="7.5" fill="#9a7a64" opacity="0.45"/><ellipse cx="44.8" cy="79.7" rx="6.8" ry="6.4" fill="#6a4a3a" opacity="0.45"/><ellipse cx="16.7" cy="87.1" rx="7.3" ry="4.9" fill="#9a7a64" opacity="0.45"/><ellipse cx="0.9" cy="94.5" rx="9.5" ry="7.7" fill="#9a7a64" opacity="0.45"/><path d="M30,5 L55,5 L55,13 C61,14 62,17 62,22 L62,81 Q62,89 53,89 L32,89 Q23,89 23,81 L23,22 C23,17 24,14 30,13 Z" fill="#e0ecec" fill-opacity="0.2" stroke="#eef4f4" stroke-opacity="0.5" stroke-width="1"/><rect x="30" y="7" width="25" height="2" fill="#f0f4f4" opacity="0.35"/><rect x="30" y="10" width="25" height="1.6" fill="#f0f4f4" opacity="0.3"/><rect x="25.5" y="26" width="34" height="60" rx="6" fill="url(#gal)"/><path d="M25.5,41 L30.3,32 L33.7,41 L37.1,45.2 L39.1,56 L41.1,62 L39.1,71.6 L33.7,75.2 L25.5,74 L25.5,41 Z" fill="#1a2414" opacity="0.62"/><path d="M46.6,74 L55.4,44 L59.5,47 L59.5,74 Z" fill="#201838" opacity="0.45"/><ellipse cx="45.9" cy="80" rx="6.8" ry="4.2" fill="#d8f4fc" opacity="0.55"/><path d="M25.5,77.6 Q39.1,74 59.5,81.2 L59.5,86 L25.5,86 Z" fill="#2ab0c8" opacity="0.8"/><rect x="26.5" y="24" width="2" height="49" rx="1" fill="#fff" opacity="0.3"/></svg></symbol></defs></svg><svg width="2560" height="1242" viewBox="0 0 2560 1242" style="position:absolute;left:0;top:0" font-family='"Liberation Sans", sans-serif'><defs><pattern id="grid" x="3.3" y="1.4" width="10.27" height="10.27" patternUnits="userSpaceOnUse"><rect x="0" y="0" width="10.27" height="1" fill="#1e1e1e"/><rect x="0" y="0" width="1" height="10.27" fill="#1e1e1e"/></pattern><filter id="sh" x="-5%" y="-5%" width="110%" height="110%"><feDropShadow dx="2" dy="2" stdDeviation="2.5" flood-color="#000" flood-opacity="0.45"/></filter></defs><rect width="2560" height="1242" fill="#212121"/><rect width="2560" height="1242" fill="url(#grid)"/><rect x="0" y="0" width="2560" height="1" fill="#cfcfcf"/><path d="M56.8,1242 L56.8,420.8 L2320,420.8" fill="none" stroke="#1f2738" stroke-width="2"/><path d="M460.23,486.39 L470.5,486.39 L489.12,486.39 L489.12,415.7 L507.73,415.7 L518,415.7" fill="none" stroke="rgba(0,0,0,0.22)" stroke-width="7.08" stroke-linecap="round"/><path d="M460.23,486.39 L470.5,486.39 L489.12,486.39 L489.12,415.7 L507.73,415.7 L518,415.7" fill="none" stroke="#B39DDB" stroke-width="3.08"/><circle cx="489.12" cy="451.04" r="5.13" fill="#B39DDB"/><path d="M460.23,486.39 L470.5,486.39 L494.37,486.39 L494.37,467 L518.23,467 L528.5,467" fill="none" stroke="rgba(0,0,0,0.22)" stroke-width="7.08" stroke-linecap="round"/><path d="M460.23,486.39 L470.5,486.39 L494.37,486.39 L494.37,467 L518.23,467 L528.5,467" fill="none" stroke="#B39DDB" stroke-width="3.08"/><circle cx="494.37" cy="476.69" r="5.13" fill="#B39DDB"/><path d="M645.8,467 L656.07,467 L700.93,467 L700.93,486.59 L745.8,486.59 L756.07,486.59" fill="none" stroke="rgba(0,0,0,0.22)" stroke-width="7.08" stroke-linecap="round"/><path d="M645.8,467 L656.07,467 L700.93,467 L700.93,486.59 L745.8,486.59 L756.07,486.59" fill="none" stroke="#B39DDB" stroke-width="3.08"/><circle cx="700.93" cy="476.79" r="5.13" fill="#B39DDB"/><path d="M978.03,486.59 L988.3,486.59 L997.65,486.59 L997.65,486.39 L1007,486.39 L1017.27,486.39" fill="none" stroke="rgba(0,0,0,0.22)" stroke-width="7.08" stroke-linecap="round"/><path d="M978.03,486.59 L988.3,486.59 L997.65,486.59 L997.65,486.39 L1007,486.39 L1017.27,486.39" fill="none" stroke="#B39DDB" stroke-width="3.08"/><circle cx="997.65" cy="486.49" r="5.13" fill="#B39DDB"/><path d="M460.23,506.93 L470.5,506.93 L738.75,506.93 L738.75,506.93 L1007,506.93 L1017.27,506.93" fill="none" stroke="rgba(0,0,0,0.22)" stroke-width="7.08" stroke-linecap="round"/><path d="M460.23,506.93 L470.5,506.93 L738.75,506.93 L738.75,506.93 L1007,506.93 L1017.27,506.93" fill="none" stroke="#FFA931" stroke-width="3.08"/><circle cx="738.75" cy="506.93" r="5.13" fill="#FFA931"/><path d="M460.23,527.47 L470.5,527.47 L738.75,527.47 L738.75,527.47 L1007,527.47 L1017.27,527.47" fill="none" stroke="rgba(0,0,0,0.22)" stroke-width="7.08" stroke-linecap="round"/><path d="M460.23,527.47 L470.5,527.47 L738.75,527.47 L738.75,527.47 L1007,527.47 L1017.27,527.47" fill="none" stroke="#FFA931" stroke-width="3.08"/><circle cx="738.75" cy="527.47" r="5.13" fill="#FFA931"/><path d="M460.23,548.01 L470.5,548.01 L738.75,548.01 L738.75,548.01 L1007,548.01 L1017.27,548.01" fill="none" stroke="rgba(0,0,0,0.22)" stroke-width="7.08" stroke-linecap="round"/><path d="M460.23,548.01 L470.5,548.01 L738.75,548.01 L738.75,548.01 L1007,548.01 L1017.27,548.01" fill="none" stroke="#FF9CF9" stroke-width="3.08"/><circle cx="738.75" cy="548.01" r="5.13" fill="#FF9CF9"/><path d="M460.23,568.55 L470.5,568.55 L738.75,568.55 L738.75,568.55 L1007,568.55 L1017.27,568.55" fill="none" stroke="rgba(0,0,0,0.22)" stroke-width="7.08" stroke-linecap="round"/><path d="M460.23,568.55 L470.5,568.55 L738.75,568.55 L738.75,568.55 L1007,568.55 L1017.27,568.55" fill="none" stroke="#FF6E6E" stroke-width="3.08"/><circle cx="738.75" cy="568.55" r="5.13" fill="#FF6E6E"/><path d="M960.23,650.49 L970.5,650.49 L988.75,650.49 L988.75,589.09 L1007,589.09 L1017.27,589.09" fill="none" stroke="rgba(0,0,0,0.22)" stroke-width="7.08" stroke-linecap="round"/><path d="M960.23,650.49 L970.5,650.49 L988.75,650.49 L988.75,589.09 L1007,589.09 L1017.27,589.09" fill="none" stroke="#9A9" stroke-width="3.08"/><circle cx="988.75" cy="619.79" r="5.13" fill="#9A9"/><path d="M460.23,609.63 L470.5,609.63 L611.9,609.63 L611.9,650.49 L753.3,650.49 L763.57,650.49" fill="none" stroke="rgba(0,0,0,0.22)" stroke-width="7.08" stroke-linecap="round"/><path d="M460.23,609.63 L470.5,609.63 L611.9,609.63 L611.9,650.49 L753.3,650.49 L763.57,650.49" fill="none" stroke="#9A9" stroke-width="3.08"/><circle cx="611.9" cy="630.06" r="5.13" fill="#9A9"/><path d="M724.53,732.49 L734.8,732.49 L744.05,732.49 L744.05,671.03 L753.3,671.03 L763.57,671.03" fill="none" stroke="rgba(0,0,0,0.22)" stroke-width="7.08" stroke-linecap="round"/><path d="M724.53,732.49 L734.8,732.49 L744.05,732.49 L744.05,671.03 L753.3,671.03 L763.57,671.03" fill="none" stroke="#9A9" stroke-width="3.08"/><circle cx="744.05" cy="701.76" r="5.13" fill="#9A9"/><path d="M1331.23,589.09 L1341.5,589.09 L1354.8,589.09 L1354.8,455.59 L1368.1,455.59 L1378.37,455.59" fill="none" stroke="rgba(0,0,0,0.22)" stroke-width="7.08" stroke-linecap="round"/><path d="M1331.23,589.09 L1341.5,589.09 L1354.8,589.09 L1354.8,455.59 L1368.1,455.59 L1378.37,455.59" fill="none" stroke="#FFF" stroke-width="3.08"/><circle cx="1354.8" cy="522.34" r="5.13" fill="#FFF"/><g filter="url(#sh)"><rect x="517.9" y="400.4" width="118.6" height="30.7" rx="8.22" fill="#353535"/></g><circle cx="518.2" cy="415.75" r="4.11" fill="#686"/><circle cx="533.4" cy="415.75" r="5.13" fill="#666"/><text x="549.6" y="420.9" font-size="14.38" fill="#999" text-anchor="start">FreeU_V2</text><g filter="url(#sh)"><rect x="528.1" y="451.6" width="118.7" height="30.8" rx="8.22" fill="#353535"/></g><circle cx="528.4" cy="467" r="4.11" fill="#686"/><circle cx="645.8" cy="467" r="4.11" fill="#686"/><circle cx="543.6" cy="467" r="5.13" fill="#666"/><text x="559.8" y="472.1" font-size="14.38" fill="#999" text-anchor="start">FreeU_V2</text><g filter="url(#sh)"><rect x="57" y="441.2" width="413" height="585.1" fill="#3f5159"/></g><rect x="57" y="441.2" width="413" height="31.2" fill="#2a363b"/><rect x="67.27" y="451.47" width="10.27" height="10.27" fill="#666"/><text x="87.81" y="461.74" font-size="14.38" fill="#999" text-anchor="start">Efficient Loader</text><rect x="320.98" y="420.66" width="147.72" height="20.54" rx="5.13" fill="#0F1F0F"/><text x="327.14" y="435.04" font-size="12.32" fill="#FFF" text-anchor="start" stroke="#FFF" stroke-width="0.25">Efficiency Nodes for Co..</text><circle cx="67.27" cy="486.39" r="4.11" fill="#778"/><text x="77.54" y="491.52" font-size="12.32" fill="#AAA" text-anchor="start">lora_stack</text><circle cx="67.27" cy="506.93" r="4.11" fill="#778"/><text x="77.54" y="512.06" font-size="12.32" fill="#AAA" text-anchor="start">cnet_stack</text><circle cx="460.23" cy="486.39" r="4.11" fill="#B39DDB" stroke="#000" stroke-width="1"/><text x="449.46" y="491.52" font-size="12.32" fill="#AAA" text-anchor="end">MODEL</text><circle cx="460.23" cy="506.93" r="4.11" fill="#FFA931" stroke="#000" stroke-width="1"/><text x="449.46" y="512.06" font-size="12.32" fill="#AAA" text-anchor="end">CONDITIONING+</text><circle cx="460.23" cy="527.47" r="4.11" fill="#FFA931" stroke="#000" stroke-width="1"/><text x="449.46" y="532.6" font-size="12.32" fill="#AAA" text-anchor="end">CONDITIONING-</text><circle cx="460.23" cy="548.01" r="4.11" fill="#FF9CF9" stroke="#000" stroke-width="1"/><text x="449.46" y="553.14" font-size="12.32" fill="#AAA" text-anchor="end">LATENT</text><circle cx="460.23" cy="568.55" r="4.11" fill="#FF6E6E" stroke="#000" stroke-width="1"/><text x="449.46" y="573.68" font-size="12.32" fill="#AAA" text-anchor="end">VAE</text><circle cx="460.23" cy="589.09" r="4.11" fill="#FFD500" stroke="#000" stroke-width="1"/><text x="449.46" y="594.22" font-size="12.32" fill="#AAA" text-anchor="end">CLIP</text><circle cx="460.23" cy="609.63" r="4.11" fill="#7F7" stroke="#000" stroke-width="1"/><text x="449.46" y="614.76" font-size="12.32" fill="#AAA" text-anchor="end">DEPENDENCIES</text><rect x="72.41" y="621.3" width="380.69" height="20.54" rx="10.27" fill="#222" stroke="#666" stroke-width="1"/><path d="M88.84,626.43 L78.57,631.57 L88.84,636.7 Z M436.66,626.43 L446.93,631.57 L436.66,636.7 Z" fill="#DDD"/><text x="92.94" y="635.68" font-size="12.32" fill="#999" text-anchor="start">ckpt_name</text><text x="417.15" y="635.68" font-size="12.32" fill="#DDD" text-anchor="end">dreamshaper_8.safetensors</text><rect x="72.41" y="645.9" width="380.69" height="20.54" rx="10.27" fill="#222" stroke="#666" stroke-width="1"/><path d="M88.84,651.03 L78.57,656.17 L88.84,661.3 Z M436.66,651.03 L446.93,656.17 L436.66,661.3 Z" fill="#DDD"/><text x="92.94" y="660.28" font-size="12.32" fill="#999" text-anchor="start">vae_name</text><text x="417.15" y="660.28" font-size="12.32" fill="#DDD" text-anchor="end">VAE\vae-ft-mse-840000-ema-pruned.safetensors</text><rect x="72.41" y="670.5" width="380.69" height="20.54" rx="10.27" fill="#222" stroke="#666" stroke-width="1"/><path d="M88.84,675.63 L78.57,680.77 L88.84,685.9 Z M436.66,675.63 L446.93,680.77 L436.66,685.9 Z" fill="#DDD"/><text x="92.94" y="684.88" font-size="12.32" fill="#999" text-anchor="start">clip_skip</text><text x="417.15" y="684.88" font-size="12.32" fill="#DDD" text-anchor="end">-1</text><rect x="72.41" y="695.2" width="380.69" height="20.54" rx="10.27" fill="#222" stroke="#666" stroke-width="1"/><path d="M88.84,700.34 L78.57,705.47 L88.84,710.61 Z M436.66,700.34 L446.93,705.47 L436.66,710.61 Z" fill="#DDD"/><text x="92.94" y="709.58" font-size="12.32" fill="#999" text-anchor="start">lora_name</text><text x="417.15" y="709.58" font-size="12.32" fill="#DDD" text-anchor="end">None</text><rect x="72.41" y="903.2" width="380.69" height="20.54" rx="10.27" fill="#222" stroke="#666" stroke-width="1"/><path d="M88.84,908.34 L78.57,913.47 L88.84,918.61 Z M436.66,908.34 L446.93,913.47 L436.66,918.61 Z" fill="#DDD"/><text x="92.94" y="917.58" font-size="12.32" fill="#999" text-anchor="start">token_normalization</text><text x="417.15" y="917.58" font-size="12.32" fill="#DDD" text-anchor="end">none</text><rect x="72.41" y="927.9" width="380.69" height="20.54" rx="10.27" fill="#222" stroke="#666" stroke-width="1"/><path d="M88.84,933.03 L78.57,938.17 L88.84,943.3 Z M436.66,933.03 L446.93,938.17 L436.66,943.3 Z" fill="#DDD"/><text x="92.94" y="942.28" font-size="12.32" fill="#999" text-anchor="start">weight_interpretation</text><text x="417.15" y="942.28" font-size="12.32" fill="#DDD" text-anchor="end">comfy</text><rect x="72.41" y="952.6" width="380.69" height="20.54" rx="10.27" fill="#222" stroke="#666" stroke-width="1"/><path d="M88.84,957.74 L78.57,962.87 L88.84,968 Z M436.66,957.74 L446.93,962.87 L436.66,968 Z" fill="#DDD"/><text x="92.94" y="966.98" font-size="12.32" fill="#999" text-anchor="start">empty_latent_width</text><text x="417.15" y="966.98" font-size="12.32" fill="#DDD" text-anchor="end">576</text><rect x="72.41" y="977.3" width="380.69" height="20.54" rx="10.27" fill="#222" stroke="#666" stroke-width="1"/><path d="M88.84,982.43 L78.57,987.57 L88.84,992.7 Z M436.66,982.43 L446.93,987.57 L436.66,992.7 Z" fill="#DDD"/><text x="92.94" y="991.68" font-size="12.32" fill="#999" text-anchor="start">empty_latent_height</text><text x="417.15" y="991.68" font-size="12.32" fill="#DDD" text-anchor="end">768</text><rect x="72.41" y="1002" width="380.69" height="20.54" rx="10.27" fill="#222" stroke="#666" stroke-width="1"/><path d="M88.84,1007.13 L78.57,1012.27 L88.84,1017.4 Z M436.66,1007.13 L446.93,1012.27 L436.66,1017.4 Z" fill="#DDD"/><text x="92.94" y="1016.38" font-size="12.32" fill="#999" text-anchor="start">batch_size</text><text x="417.15" y="1016.38" font-size="12.32" fill="#DDD" text-anchor="end">1</text><rect x="68.1" y="731" width="391" height="70.9" fill="#29353b"/><rect x="68.1" y="823" width="391" height="70.9" fill="#29353b"/><text x="70.3" y="749" font-size="14.2" fill="#E6E6E6" text-anchor="start">beautiful scenery nature glass bottle landscape, ,colorful</text><text x="70.3" y="770.8" font-size="14.2" fill="#E6E6E6" text-anchor="start">filled galaxy bottle,</text><text x="70.3" y="841" font-size="14.2" fill="#E6E6E6" text-anchor="start">embedding:Baddream , embedding:Unrealisticdream</text><path d="M70,846 L72.2,844.2 L74.4,846.6 L76.6,844.2 L78.8,846.6 L81,844.2 L83.2,846.6 L85.4,844.2 L87.6,846.6 L89.8,844.2 L92,846.6 L94.2,844.2 L96.4,846.6 L98.6,844.2 L100.8,846.6 L103,844.2 L105.2,846.6 L107.4,844.2 L109.6,846.6 L111.8,844.2 L114,846.6 L116.2,844.2 L118.4,846.6 L120.6,844.2 L122.8,846.6 L125,844.2 L127.2,846.6 L129.4,844.2 L131.6,846.6 L133.8,844.2 L136,846.6 L138.2,844.2 L140.4,846.6 L142.6,844.2 L144.8,846.6 L147,844.2 L149.2,846.6 L151.4,844.2 L153.6,846.6 L155.8,844.2 L158,846.6 L160.2,844.2 L162.4,846.6 L164.6,844.2 L166.8,846.6 L169,844.2 L171.2,846.6 L173.4,844.2 L175.6,846.6 L177.8,844.2 L180,846.6 L182.2,844.2 L184.4,846.6 L186.6,844.2 L188.8,846.6 L191,844.2 L193.2,846.6 L195.4,844.2 L197.6,846.6 L199.8,844.2 L202,846.6 L204.2,844.2 L206.4,846.6 L208.6,844.2 L210.8,846.6" fill="none" stroke="#ee1111" stroke-width="1.2"/><g filter="url(#sh)"><rect x="745.8" y="441.4" width="242" height="90.2" rx="8.22" fill="#333355"/></g><path d="M745.8,472.6 L745.8,449.62 Q745.8,441.4 754.02,441.4 L979.58,441.4 Q987.8,441.4 987.8,449.62 L987.8,472.6 L745.8,472.6 Z" fill="#222233"/><circle cx="761.2" cy="456.8" r="5.13" fill="#666"/><text x="776.61" y="461.94" font-size="14.38" fill="#999" text-anchor="start">ModelSamplerTonemapNoiseTest</text><rect x="852.27" y="420.86" width="134.23" height="20.54" rx="5.13" fill="#0F1F0F"/><text x="858.43" y="435.24" font-size="12.32" fill="#FFF" text-anchor="start" stroke="#FFF" stroke-width="0.25">ComfyUI_experiments</text><circle cx="756.07" cy="486.59" r="4.11" fill="#B39DDB"/><text x="766.34" y="491.72" font-size="12.32" fill="#AAA" text-anchor="start">model</text><circle cx="978.03" cy="486.59" r="4.11" fill="#B39DDB" stroke="#000" stroke-width="1"/><text x="967.26" y="491.72" font-size="12.32" fill="#AAA" text-anchor="end">MODEL</text><rect x="761.2" y="498.8" width="209.69" height="20.54" rx="10.27" fill="#222" stroke="#666" stroke-width="1"/><path d="M777.64,503.94 L767.37,509.07 L777.64,514.21 Z M954.46,503.94 L964.73,509.07 L954.46,514.21 Z" fill="#DDD"/><text x="781.75" y="513.18" font-size="12.32" fill="#999" text-anchor="start">multiplier</text><text x="934.95" y="513.18" font-size="12.32" fill="#DDD" text-anchor="end">0.12</text><g filter="url(#sh)"><rect x="1007" y="441.2" width="334" height="606.8" fill="#333355"/></g><rect x="1007" y="441.2" width="334" height="31.2" fill="#222233"/><rect x="1017.27" y="451.47" width="10.27" height="10.27" fill="#666"/><text x="1037.81" y="461.74" font-size="14.38" fill="#999" text-anchor="start">KSampler (Efficient)</text><rect x="1191.98" y="420.66" width="147.72" height="20.54" rx="5.13" fill="#0F1F0F"/><text x="1198.14" y="435.04" font-size="12.32" fill="#FFF" text-anchor="start" stroke="#FFF" stroke-width="0.25">Efficiency Nodes for Co..</text><circle cx="1017.27" cy="486.39" r="4.11" fill="#B39DDB"/><text x="1027.54" y="491.52" font-size="12.32" fill="#AAA" text-anchor="start">model</text><circle cx="1017.27" cy="506.93" r="4.11" fill="#FFA931"/><text x="1027.54" y="512.06" font-size="12.32" fill="#AAA" text-anchor="start">positive</text><circle cx="1017.27" cy="527.47" r="4.11" fill="#FFA931"/><text x="1027.54" y="532.6" font-size="12.32" fill="#AAA" text-anchor="start">negative</text><circle cx="1017.27" cy="548.01" r="4.11" fill="#FF9CF9"/><text x="1027.54" y="553.14" font-size="12.32" fill="#AAA" text-anchor="start">latent_image</text><circle cx="1017.27" cy="568.55" r="4.11" fill="#FF6E6E"/><text x="1027.54" y="573.68" font-size="12.32" fill="#AAA" text-anchor="start">optional_vae</text><circle cx="1017.27" cy="589.09" r="4.11" fill="#7F7"/><text x="1027.54" y="594.22" font-size="12.32" fill="#AAA" text-anchor="start">script</text><circle cx="1331.23" cy="486.39" r="4.11" fill="#B39DDB" stroke="#000" stroke-width="1"/><text x="1320.46" y="491.52" font-size="12.32" fill="#AAA" text-anchor="end">MODEL</text><circle cx="1331.23" cy="506.93" r="4.11" fill="#FFA931" stroke="#000" stroke-width="1"/><text x="1320.46" y="512.06" font-size="12.32" fill="#AAA" text-anchor="end">CONDITIONING+</text><circle cx="1331.23" cy="527.47" r="4.11" fill="#FFA931" stroke="#000" stroke-width="1"/><text x="1320.46" y="532.6" font-size="12.32" fill="#AAA" text-anchor="end">CONDITIONING-</text><circle cx="1331.23" cy="548.01" r="4.11" fill="#FF9CF9" stroke="#000" stroke-width="1"/><text x="1320.46" y="553.14" font-size="12.32" fill="#AAA" text-anchor="end">LATENT</text><circle cx="1331.23" cy="568.55" r="4.11" fill="#FF6E6E" stroke="#000" stroke-width="1"/><text x="1320.46" y="573.68" font-size="12.32" fill="#AAA" text-anchor="end">VAE</text><circle cx="1331.23" cy="589.09" r="4.11" fill="#64B5F6" stroke="#000" stroke-width="1"/><text x="1320.46" y="594.22" font-size="12.32" fill="#AAA" text-anchor="end">IMAGE</text><rect x="1022.4" y="601.4" width="301.69" height="20.54" rx="10.27" fill="#222" stroke="#666" stroke-width="1"/><path d="M1038.84,606.53 L1028.57,611.67 L1038.84,616.8 Z M1307.66,606.53 L1317.93,611.67 L1307.66,616.8 Z" fill="#DDD"/><text x="1042.94" y="615.78" font-size="12.32" fill="#999" text-anchor="start">seed</text><text x="1288.15" y="615.78" font-size="12.32" fill="#DDD" text-anchor="end">0</text><rect x="1022.4" y="650.62" width="301.69" height="20.54" rx="10.27" fill="#222" stroke="#666" stroke-width="1"/><path d="M1038.84,655.75 L1028.57,660.89 L1038.84,666.02 Z M1307.66,655.75 L1317.93,660.89 L1307.66,666.02 Z" fill="#DDD"/><text x="1042.94" y="665" font-size="12.32" fill="#999" text-anchor="start">steps</text><text x="1288.15" y="665" font-size="12.32" fill="#DDD" text-anchor="end">6</text><rect x="1022.4" y="675.23" width="301.69" height="20.54" rx="10.27" fill="#222" stroke="#666" stroke-width="1"/><path d="M1038.84,680.37 L1028.57,685.5 L1038.84,690.63 Z M1307.66,680.37 L1317.93,685.5 L1307.66,690.63 Z" fill="#DDD"/><text x="1042.94" y="689.61" font-size="12.32" fill="#999" text-anchor="start">cfg</text><text x="1288.15" y="689.61" font-size="12.32" fill="#DDD" text-anchor="end">12.0</text><rect x="1022.4" y="699.84" width="301.69" height="20.54" rx="10.27" fill="#222" stroke="#666" stroke-width="1"/><path d="M1038.84,704.97 L1028.57,710.11 L1038.84,715.24 Z M1307.66,704.97 L1317.93,710.11 L1307.66,715.24 Z" fill="#DDD"/><text x="1042.94" y="714.22" font-size="12.32" fill="#999" text-anchor="start">sampler_name</text><text x="1288.15" y="714.22" font-size="12.32" fill="#DDD" text-anchor="end">uni_pc_bh2</text><rect x="1022.4" y="724.45" width="301.69" height="20.54" rx="10.27" fill="#222" stroke="#666" stroke-width="1"/><path d="M1038.84,729.58 L1028.57,734.72 L1038.84,739.85 Z M1307.66,729.58 L1317.93,734.72 L1307.66,739.85 Z" fill="#DDD"/><text x="1042.94" y="738.83" font-size="12.32" fill="#999" text-anchor="start">scheduler</text><text x="1288.15" y="738.83" font-size="12.32" fill="#DDD" text-anchor="end">ddim_uniform</text><rect x="1022.4" y="749.06" width="301.69" height="20.54" rx="10.27" fill="#222" stroke="#666" stroke-width="1"/><path d="M1038.84,754.19 L1028.57,759.33 L1038.84,764.46 Z M1307.66,754.19 L1317.93,759.33 L1307.66,764.46 Z" fill="#DDD"/><text x="1042.94" y="763.44" font-size="12.32" fill="#999" text-anchor="start">denoise</text><text x="1288.15" y="763.44" font-size="12.32" fill="#DDD" text-anchor="end">1.00</text><rect x="1022.4" y="773.67" width="301.69" height="20.54" rx="10.27" fill="#222" stroke="#666" stroke-width="1"/><path d="M1038.84,778.8 L1028.57,783.94 L1038.84,789.07 Z M1307.66,778.8 L1317.93,783.94 L1307.66,789.07 Z" fill="#DDD"/><text x="1042.94" y="788.05" font-size="12.32" fill="#999" text-anchor="start">preview_method</text><text x="1288.15" y="788.05" font-size="12.32" fill="#DDD" text-anchor="end">auto</text><rect x="1022.4" y="798.28" width="301.69" height="20.54" rx="10.27" fill="#222" stroke="#666" stroke-width="1"/><path d="M1038.84,803.41 L1028.57,808.55 L1038.84,813.68 Z M1307.66,803.41 L1317.93,808.55 L1307.66,813.68 Z" fill="#DDD"/><text x="1042.94" y="812.66" font-size="12.32" fill="#999" text-anchor="start">vae_decode</text><text x="1288.15" y="812.66" font-size="12.32" fill="#DDD" text-anchor="end">true</text><rect x="1022.4" y="626.01" width="301.69" height="20.54" fill="#222" stroke="#666" stroke-width="1"/><text x="1133.8" y="640.39" font-size="12.32" fill="#E8E8E8" text-anchor="start" stroke="#E8E8E8" stroke-width="0.2">Randomize /</text><text x="1227" y="640.39" font-size="12.32" fill="#E8E8E8" text-anchor="start" stroke="#E8E8E8" stroke-width="0.2">0</text><g transform="translate(1116.5,629.5)"><path d="M0,3 L6,0 L12,3 L12,10 L6,13 L0,10Z" fill="#e8e4ee"/><path d="M6,6 L12,3 L12,10 L6,13Z" fill="#c9c3d6"/><path d="M0,3 L6,6 L6,13 L0,10Z" fill="#dcd7e4"/><ellipse cx="6" cy="3" rx="1.3" ry="0.8" fill="#e02828"/><circle cx="1.9" cy="6.4" r="0.75" fill="#5a4a8a"/><circle cx="4.1" cy="9.9" r="0.75" fill="#5a4a8a"/><circle cx="7.8" cy="10.2" r="0.75" fill="#5a4a8a"/><circle cx="9" cy="8.2" r="0.75" fill="#5a4a8a"/><circle cx="10.2" cy="6.2" r="0.75" fill="#5a4a8a"/></g><g transform="translate(1214.6,636.2)"><g transform="rotate(0) translate(2.2,-1.2)"><path d="M-1.2,-5.2 L1.6,-0.6 L3.6,-1.8 L2.6,2.6 L-1.6,2.4 L0.2,1.2 L-2.6,-3.4 Z" fill="#2fd679"/></g><g transform="rotate(120) translate(2.2,-1.2)"><path d="M-1.2,-5.2 L1.6,-0.6 L3.6,-1.8 L2.6,2.6 L-1.6,2.4 L0.2,1.2 L-2.6,-3.4 Z" fill="#139c5e"/></g><g transform="rotate(240) translate(2.2,-1.2)"><path d="M-1.2,-5.2 L1.6,-0.6 L3.6,-1.8 L2.6,2.6 L-1.6,2.4 L0.2,1.2 L-2.6,-3.4 Z" fill="#25c26c"/></g></g><svg x="1007" y="914" width="333" height="42.6" viewBox="0 0 922 118" preserveAspectRatio="none"><use href="#strip"/></svg><g filter="url(#sh)"><rect x="753.3" y="605.3" width="216.7" height="229" fill="#335555"/></g><rect x="753.3" y="605.3" width="216.7" height="31.2" fill="#223333"/><rect x="763.57" y="615.57" width="10.27" height="10.27" fill="#666"/><text x="784.11" y="625.84" font-size="14.38" fill="#999" text-anchor="start">XY Plot</text><rect x="820.98" y="584.76" width="147.72" height="20.54" rx="5.13" fill="#0F1F0F"/><text x="827.14" y="599.14" font-size="12.32" fill="#FFF" text-anchor="start" stroke="#FFF" stroke-width="0.25">Efficiency Nodes for Co..</text><circle cx="763.57" cy="650.49" r="4.11" fill="#7F7"/><text x="773.84" y="655.62" font-size="12.32" fill="#AAA" text-anchor="start">dependencies</text><circle cx="763.57" cy="671.03" r="4.11" fill="#7F7"/><text x="773.84" y="676.16" font-size="12.32" fill="#AAA" text-anchor="start">X</text><circle cx="763.57" cy="691.57" r="4.11" fill="#778"/><text x="773.84" y="696.7" font-size="12.32" fill="#AAA" text-anchor="start">Y</text><circle cx="960.23" cy="650.49" r="4.11" fill="#7F7" stroke="#000" stroke-width="1"/><text x="949.46" y="655.62" font-size="12.32" fill="#AAA" text-anchor="end">SCRIPT</text><rect x="768.7" y="703.5" width="184.39" height="20.54" rx="10.27" fill="#222" stroke="#666" stroke-width="1"/><path d="M785.14,708.63 L774.87,713.77 L785.14,718.9 Z M936.66,708.63 L946.93,713.77 L936.66,718.9 Z" fill="#DDD"/><text x="789.25" y="717.88" font-size="12.32" fill="#999" text-anchor="start">grid_spacing</text><text x="917.15" y="717.88" font-size="12.32" fill="#DDD" text-anchor="end">0</text><rect x="768.7" y="728.11" width="184.39" height="20.54" rx="10.27" fill="#222" stroke="#666" stroke-width="1"/><path d="M785.14,733.25 L774.87,738.38 L785.14,743.51 Z M936.66,733.25 L946.93,738.38 L936.66,743.51 Z" fill="#DDD"/><text x="789.25" y="742.49" font-size="12.32" fill="#999" text-anchor="start">XY_flip</text><text x="917.15" y="742.49" font-size="12.32" fill="#DDD" text-anchor="end">False</text><rect x="768.7" y="752.72" width="184.39" height="20.54" rx="10.27" fill="#222" stroke="#666" stroke-width="1"/><path d="M785.14,757.86 L774.87,762.99 L785.14,768.12 Z M936.66,757.86 L946.93,762.99 L936.66,768.12 Z" fill="#DDD"/><text x="789.25" y="767.1" font-size="12.32" fill="#999" text-anchor="start">Y_label_orientation</text><text x="917.15" y="767.1" font-size="12.32" fill="#DDD" text-anchor="end">Horizontal</text><rect x="768.7" y="777.33" width="184.39" height="20.54" rx="10.27" fill="#222" stroke="#666" stroke-width="1"/><path d="M785.14,782.47 L774.87,787.6 L785.14,792.74 Z M936.66,782.47 L946.93,787.6 L936.66,792.74 Z" fill="#DDD"/><text x="789.25" y="791.71" font-size="12.32" fill="#999" text-anchor="start">cache_models</text><text x="917.15" y="791.71" font-size="12.32" fill="#DDD" text-anchor="end">True</text><rect x="768.7" y="801.94" width="184.39" height="20.54" rx="10.27" fill="#222" stroke="#666" stroke-width="1"/><path d="M785.14,807.08 L774.87,812.21 L785.14,817.35 Z M936.66,807.08 L946.93,812.21 L936.66,817.35 Z" fill="#DDD"/><text x="789.25" y="816.32" font-size="12.32" fill="#999" text-anchor="start">ksampler_output_image</text><text x="917.15" y="816.32" font-size="12.32" fill="#DDD" text-anchor="end">Plot</text><g filter="url(#sh)"><rect x="497.1" y="687.3" width="237.2" height="214.9" fill="#335555"/></g><rect x="497.1" y="687.3" width="237.2" height="31.2" fill="#223333"/><rect x="507.37" y="697.57" width="10.27" height="10.27" fill="#666"/><text x="527.91" y="707.84" font-size="14.38" fill="#999" text-anchor="start">XY Input: Steps</text><rect x="585.28" y="666.76" width="147.72" height="20.54" rx="5.13" fill="#0F1F0F"/><text x="591.44" y="681.14" font-size="12.32" fill="#FFF" text-anchor="start" stroke="#FFF" stroke-width="0.25">Efficiency Nodes for Co..</text><circle cx="724.53" cy="732.49" r="4.11" fill="#7F7" stroke="#000" stroke-width="1"/><text x="713.76" y="737.62" font-size="12.32" fill="#AAA" text-anchor="end">X or Y</text><rect x="512.5" y="744.9" width="204.89" height="20.54" rx="10.27" fill="#222" stroke="#666" stroke-width="1"/><path d="M528.94,750.03 L518.67,755.17 L528.94,760.3 Z M700.96,750.03 L711.23,755.17 L700.96,760.3 Z" fill="#DDD"/><text x="533.05" y="759.28" font-size="12.32" fill="#999" text-anchor="start">target_parameter</text><text x="681.45" y="759.28" font-size="12.32" fill="#DDD" text-anchor="end">steps</text><rect x="512.5" y="769.51" width="204.89" height="20.54" rx="10.27" fill="#222" stroke="#666" stroke-width="1"/><path d="M528.94,774.64 L518.67,779.78 L528.94,784.91 Z M700.96,774.64 L711.23,779.78 L700.96,784.91 Z" fill="#DDD"/><text x="533.05" y="783.89" font-size="12.32" fill="#999" text-anchor="start">batch_count</text><text x="681.45" y="783.89" font-size="12.32" fill="#DDD" text-anchor="end">12</text><rect x="512.5" y="794.12" width="204.89" height="20.54" rx="10.27" fill="#222" stroke="#666" stroke-width="1"/><path d="M528.94,799.25 L518.67,804.39 L528.94,809.52 Z M700.96,799.25 L711.23,804.39 L700.96,809.52 Z" fill="#DDD"/><text x="533.05" y="808.5" font-size="12.32" fill="#999" text-anchor="start">first_step</text><text x="681.45" y="808.5" font-size="12.32" fill="#DDD" text-anchor="end">1</text><rect x="512.5" y="818.73" width="204.89" height="20.54" rx="10.27" fill="#222" stroke="#666" stroke-width="1"/><path d="M528.94,823.87 L518.67,829 L528.94,834.13 Z M700.96,823.87 L711.23,829 L700.96,834.13 Z" fill="#DDD"/><text x="533.05" y="833.11" font-size="12.32" fill="#999" text-anchor="start">last_step</text><text x="681.45" y="833.11" font-size="12.32" fill="#DDD" text-anchor="end">12</text><rect x="1361.94" y="404.24" width="936.02" height="381.82" rx="16.43" fill="none" stroke="#FFF" stroke-width="1.1" opacity="0.78"/><g filter="url(#sh)"><rect x="1368.1" y="410.4" width="923.7" height="369.5" rx="8.22" fill="#2e6b6b"/></g><path d="M1368.1,441.6 L1368.1,418.62 Q1368.1,410.4 1376.32,410.4 L2283.58,410.4 Q2291.8,410.4 2291.8,418.62 L2291.8,441.6 L1368.1,441.6 Z" fill="#1b5858"/><circle cx="1383.5" cy="425.8" r="5.13" fill="#666"/><text x="1398.91" y="430.94" font-size="14.38" fill="#FFF" text-anchor="start">Save Image</text><circle cx="1378.37" cy="455.59" r="4.11" fill="#64B5F6"/><text x="1388.64" y="460.72" font-size="12.32" fill="#AAA" text-anchor="start">images</text><rect x="1383.5" y="468.5" width="891.19" height="20.54" rx="10.27" fill="#222" stroke="#666" stroke-width="1"/><text x="1398.91" y="482.88" font-size="12.32" fill="#999" text-anchor="start">filename_prefix</text><text x="2259.29" y="482.88" font-size="12.32" fill="#DDD" text-anchor="end">FreeU_v1</text><svg x="1368.2" y="577.2" width="922.1" height="117.4" viewBox="0 0 922 118" preserveAspectRatio="none"><use href="#strip"/></svg></svg><div class="abs" style="left:15px;top:16px;width:63px;height:60px;border:1px solid #c8524f;color:#ddd;font-size:24px;line-height:64px;text-align:center;-webkit-text-stroke:0.35px #ddd;">Idle</div><div class="abs" style="left:0;top:1242px;width:2560px;height:123px;background:#353535;"></div><div class="abs" style="left:8px;top:1250px;width:2600px;height:46px;background:#202020;border-radius:6px;"></div><div class="abs" style="left:40px;top:1256.8px;width:242.6px;height:30.8px;border-radius:5px;overflow:hidden;"><svg width="242.6" height="30.8" viewBox="0 0 922 118" preserveAspectRatio="none"><use href="#strip"/></svg></div><div class="abs" style="left:289.3px;top:1256.8px;width:241.5px;height:30.8px;border-radius:5px;overflow:hidden;"><svg width="241.5" height="30.8" viewBox="0 0 922 118" preserveAspectRatio="none"><use href="#strip"/></svg></div><div class="abs" style="left:8px;top:1311px;width:137px;height:48px;background:#151515;border-radius:7px;color:#fff;font-size:18px;line-height:46px;"><svg style="position:absolute;left:7px;top:16px" width="16" height="16" viewBox="0 0 16 16" fill="none" stroke="#fff" stroke-width="1.15"><path d="M1.8,0.9 V7.9 M2.3,4.4 H15 M6.3,1.1 L2.6,4.4 L6.3,7.7 M1.2,10.6 H14 M9.6,7.3 L13.5,10.6 L9.6,13.9 M14.1,7.9 V14"/></svg><span style="position:absolute;left:28.5px;top:0">Resize Feed</span></div><div class="abs" style="left:2387px;top:1330px;width:103px;height:23px;background:#1b1b1b;border:3px solid #474747;border-radius:8px;"></div><div class="abs" style="left:2508px;top:1330px;width:40px;height:23px;background:#1b1b1b;border:3px solid #474747;border-radius:8px;"></div><div class="menu"><div class="abs" style="left:18.4px;top:18.4px;width:4px;height:20px;"><div class="abs" style="left:0;top:0;width:3px;height:3px;background:#e6e6e6"></div><div class="abs" style="left:0;top:7px;width:3px;height:3px;background:#e6e6e6"></div><div class="abs" style="left:0;top:14.8px;width:3px;height:3px;background:#e6e6e6"></div></div><div class="abs" style="left:58px;top:17.6px;font-size:22.5px;color:#999;white-space:nowrap;">Queue size: 0</div><svg class="abs" style="left:2218px;top:18px" width="0" height="0"></svg><svg class="abs" style="left:218px;top:18.5px" width="18" height="18" viewBox="-9 -9 18 18"><g fill="#a79fbf"><circle r="6.2"/><rect x="-1.8" y="-9" width="3.6" height="4" rx="0.8" transform="rotate(0)"/><rect x="-1.8" y="-9" width="3.6" height="4" rx="0.8" transform="rotate(45)"/><rect x="-1.8" y="-9" width="3.6" height="4" rx="0.8" transform="rotate(90)"/><rect x="-1.8" y="-9" width="3.6" height="4" rx="0.8" transform="rotate(135)"/><rect x="-1.8" y="-9" width="3.6" height="4" rx="0.8" transform="rotate(180)"/><rect x="-1.8" y="-9" width="3.6" height="4" rx="0.8" transform="rotate(225)"/><rect x="-1.8" y="-9" width="3.6" height="4" rx="0.8" transform="rotate(270)"/><rect x="-1.8" y="-9" width="3.6" height="4" rx="0.8" transform="rotate(315)"/></g><circle r="2.6" fill="#353535"/><circle r="2.6" fill="none" stroke="#8d85a5" stroke-width="0.8"/></svg><div class="btn" style="left:15px;top:57px;width:225px;height:45px;line-height:46px;">Queue Prompt</div><div class="abs" style="left:52px;top:114px;font-size:22.5px;color:#999;white-space:nowrap;">Extra options</div><div class="abs" style="left:184.2px;top:116.3px;width:17.4px;height:17.4px;background:#fff;border:1px solid #858585;border-radius:3.5px;box-sizing:border-box;"></div><div class="sbtn" style="left:15px;top:153px;width:112px;height:22.5px;line-height:22px;">Queue Front</div><div class="sbtn" style="left:128.4px;top:153px;width:111px;height:22.5px;line-height:22px;">View Queue</div><div class="sbtn" style="left:70.7px;top:187px;width:113px;height:22.5px;line-height:22px;">View History</div><div class="abs" style="left:15px;top:231px;width:225px;height:44.4px;background:#383838;border-radius:12px;"></div><div class="btn" style="left:15px;top:231px;width:189px;height:44.4px;border-radius:12px 0 0 12px;"></div><div class="abs" style="left:15px;top:231px;width:225px;height:44.4px;line-height:44.4px;color:#ddd;font-size:30px;text-align:center;">Save</div><div class="abs" style="left:204px;top:231px;width:36px;height:44.4px;line-height:44.4px;color:#ddd;font-size:20px;text-align:center;">&#9660;</div><div class="btn" style="left:15px;top:279px;width:225px;height:89.4px;line-height:45px;padding-top:0px;">Save (API<br>Format)</div><div class="abs" style="left:15px;top:372.4px;width:225px;height:44.3px;background:#383838;border-radius:12px;"></div><div class="btn" style="left:15px;top:372.4px;width:189px;height:44.3px;border-radius:12px 0 0 12px;"></div><div class="abs" style="left:15px;top:372.4px;width:225px;height:44.3px;line-height:44.3px;color:#ddd;font-size:30px;text-align:center;">Load</div><div class="abs" style="left:204px;top:372.4px;width:36px;height:44.3px;line-height:44.3px;color:#ddd;font-size:20px;text-align:center;">&#9660;</div><div class="btn" style="left:15px;top:420.1px;width:225px;height:44.1px;line-height:44.1px;">Refresh</div><div class="btn" style="left:15px;top:468.1px;width:225px;height:44.4px;line-height:44.4px;">Clipspace</div><div class="btn" style="left:15px;top:516.2px;width:225px;height:44.3px;line-height:44.3px;">Clear</div><div class="btn" style="left:15px;top:564.4px;width:225px;height:43.6px;line-height:43.6px;">Load Default</div><div class="btn" style="left:15px;top:612.5px;width:225px;height:43.8px;line-height:43.8px;">Avatar Preview</div><div class="abs" style="left:15px;top:686.5px;width:225px;height:1px;background:#ccc;"></div><div class="btn" style="left:38px;top:721px;width:180px;height:35.4px;line-height:35px;font-size:24px;color:#999;">View 1A</div><div class="btn" style="left:99px;top:771.8px;width:56.4px;height:39.6px;"><svg style="position:absolute;left:15px;top:6.2px" width="27" height="27" viewBox="0 0 27 27"><path d="M0,3 Q0,0 3,0 L21,0 L27,6 L27,24 Q27,27 24,27 L3,27 Q0,27 0,24Z" fill="#685c9c"/><rect x="4" y="0" width="19" height="11" rx="1.5" fill="#2d1b45"/><rect x="9" y="0.4" width="12.3" height="9.8" rx="1" fill="#e6e6e6"/><rect x="16.8" y="1.6" width="3" height="7" rx="1" fill="#2d1b45"/><rect x="4" y="13.5" width="19.5" height="13.5" fill="#e6e6e6"/><rect x="4" y="13.5" width="19.5" height="2.7" fill="#f02828"/></svg></div><div class="abs" style="left:15px;top:871.5px;width:225px;height:1px;background:#ccc;"></div><div class="btn" style="left:15px;top:905.6px;width:225px;height:45px;line-height:45px;">Manager</div><div class="abs" style="left:15px;top:1064px;width:225px;height:29px;overflow:hidden;"><svg width="225" height="29" viewBox="0 0 922 118" preserveAspectRatio="none"><use href="#strip"/></svg></div></div></body></html>
